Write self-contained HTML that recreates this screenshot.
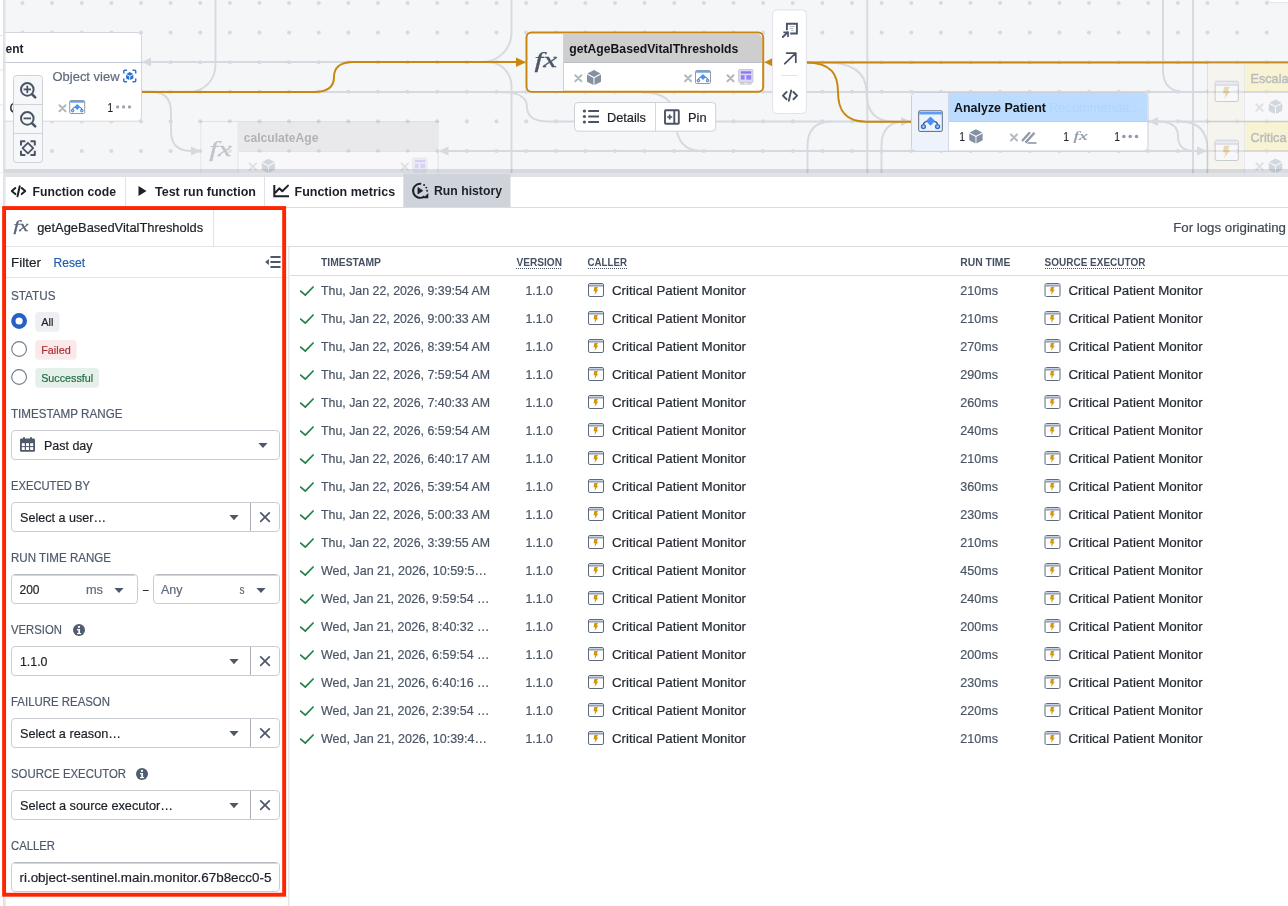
<!DOCTYPE html>
<html><head><meta charset="utf-8"><title>Run history</title>
<style>html,body{margin:0;padding:0;background:#fff;overflow:hidden}svg{display:block}text{font-family:"Liberation Sans",sans-serif;white-space:pre}</style></head><body>
<div style="will-change:transform;width:1288px;height:906px"><svg width="1288" height="906" viewBox="0 0 1288 906">
<g id="canvas">
<rect x="0" y="0" width="1288" height="173.6" fill="#f5f6f8" />
<g fill="#d7dae1">
<circle cx="22.50" cy="3.00" r="2.05"/>
<circle cx="52.12" cy="3.00" r="2.05"/>
<circle cx="81.75" cy="3.00" r="2.05"/>
<circle cx="111.38" cy="3.00" r="2.05"/>
<circle cx="141.00" cy="3.00" r="2.05"/>
<circle cx="170.62" cy="3.00" r="2.05"/>
<circle cx="200.25" cy="3.00" r="2.05"/>
<circle cx="229.88" cy="3.00" r="2.05"/>
<circle cx="259.50" cy="3.00" r="2.05"/>
<circle cx="289.12" cy="3.00" r="2.05"/>
<circle cx="318.75" cy="3.00" r="2.05"/>
<circle cx="348.38" cy="3.00" r="2.05"/>
<circle cx="378.00" cy="3.00" r="2.05"/>
<circle cx="407.62" cy="3.00" r="2.05"/>
<circle cx="437.25" cy="3.00" r="2.05"/>
<circle cx="466.88" cy="3.00" r="2.05"/>
<circle cx="496.50" cy="3.00" r="2.05"/>
<circle cx="526.12" cy="3.00" r="2.05"/>
<circle cx="555.75" cy="3.00" r="2.05"/>
<circle cx="585.38" cy="3.00" r="2.05"/>
<circle cx="615.00" cy="3.00" r="2.05"/>
<circle cx="644.62" cy="3.00" r="2.05"/>
<circle cx="674.25" cy="3.00" r="2.05"/>
<circle cx="703.88" cy="3.00" r="2.05"/>
<circle cx="733.50" cy="3.00" r="2.05"/>
<circle cx="763.12" cy="3.00" r="2.05"/>
<circle cx="792.75" cy="3.00" r="2.05"/>
<circle cx="822.38" cy="3.00" r="2.05"/>
<circle cx="852.00" cy="3.00" r="2.05"/>
<circle cx="881.62" cy="3.00" r="2.05"/>
<circle cx="911.25" cy="3.00" r="2.05"/>
<circle cx="940.88" cy="3.00" r="2.05"/>
<circle cx="970.50" cy="3.00" r="2.05"/>
<circle cx="1000.12" cy="3.00" r="2.05"/>
<circle cx="1029.75" cy="3.00" r="2.05"/>
<circle cx="1059.38" cy="3.00" r="2.05"/>
<circle cx="1089.00" cy="3.00" r="2.05"/>
<circle cx="1118.62" cy="3.00" r="2.05"/>
<circle cx="1148.25" cy="3.00" r="2.05"/>
<circle cx="1177.88" cy="3.00" r="2.05"/>
<circle cx="1207.50" cy="3.00" r="2.05"/>
<circle cx="1237.12" cy="3.00" r="2.05"/>
<circle cx="1266.75" cy="3.00" r="2.05"/>
<circle cx="22.50" cy="32.60" r="2.05"/>
<circle cx="52.12" cy="32.60" r="2.05"/>
<circle cx="81.75" cy="32.60" r="2.05"/>
<circle cx="111.38" cy="32.60" r="2.05"/>
<circle cx="141.00" cy="32.60" r="2.05"/>
<circle cx="170.62" cy="32.60" r="2.05"/>
<circle cx="200.25" cy="32.60" r="2.05"/>
<circle cx="229.88" cy="32.60" r="2.05"/>
<circle cx="259.50" cy="32.60" r="2.05"/>
<circle cx="289.12" cy="32.60" r="2.05"/>
<circle cx="318.75" cy="32.60" r="2.05"/>
<circle cx="348.38" cy="32.60" r="2.05"/>
<circle cx="378.00" cy="32.60" r="2.05"/>
<circle cx="407.62" cy="32.60" r="2.05"/>
<circle cx="437.25" cy="32.60" r="2.05"/>
<circle cx="466.88" cy="32.60" r="2.05"/>
<circle cx="496.50" cy="32.60" r="2.05"/>
<circle cx="526.12" cy="32.60" r="2.05"/>
<circle cx="555.75" cy="32.60" r="2.05"/>
<circle cx="585.38" cy="32.60" r="2.05"/>
<circle cx="615.00" cy="32.60" r="2.05"/>
<circle cx="644.62" cy="32.60" r="2.05"/>
<circle cx="674.25" cy="32.60" r="2.05"/>
<circle cx="703.88" cy="32.60" r="2.05"/>
<circle cx="733.50" cy="32.60" r="2.05"/>
<circle cx="763.12" cy="32.60" r="2.05"/>
<circle cx="792.75" cy="32.60" r="2.05"/>
<circle cx="822.38" cy="32.60" r="2.05"/>
<circle cx="852.00" cy="32.60" r="2.05"/>
<circle cx="881.62" cy="32.60" r="2.05"/>
<circle cx="911.25" cy="32.60" r="2.05"/>
<circle cx="940.88" cy="32.60" r="2.05"/>
<circle cx="970.50" cy="32.60" r="2.05"/>
<circle cx="1000.12" cy="32.60" r="2.05"/>
<circle cx="1029.75" cy="32.60" r="2.05"/>
<circle cx="1059.38" cy="32.60" r="2.05"/>
<circle cx="1089.00" cy="32.60" r="2.05"/>
<circle cx="1118.62" cy="32.60" r="2.05"/>
<circle cx="1148.25" cy="32.60" r="2.05"/>
<circle cx="1177.88" cy="32.60" r="2.05"/>
<circle cx="1207.50" cy="32.60" r="2.05"/>
<circle cx="1237.12" cy="32.60" r="2.05"/>
<circle cx="1266.75" cy="32.60" r="2.05"/>
<circle cx="22.50" cy="62.20" r="2.05"/>
<circle cx="52.12" cy="62.20" r="2.05"/>
<circle cx="81.75" cy="62.20" r="2.05"/>
<circle cx="111.38" cy="62.20" r="2.05"/>
<circle cx="141.00" cy="62.20" r="2.05"/>
<circle cx="170.62" cy="62.20" r="2.05"/>
<circle cx="200.25" cy="62.20" r="2.05"/>
<circle cx="229.88" cy="62.20" r="2.05"/>
<circle cx="259.50" cy="62.20" r="2.05"/>
<circle cx="289.12" cy="62.20" r="2.05"/>
<circle cx="318.75" cy="62.20" r="2.05"/>
<circle cx="348.38" cy="62.20" r="2.05"/>
<circle cx="378.00" cy="62.20" r="2.05"/>
<circle cx="407.62" cy="62.20" r="2.05"/>
<circle cx="437.25" cy="62.20" r="2.05"/>
<circle cx="466.88" cy="62.20" r="2.05"/>
<circle cx="496.50" cy="62.20" r="2.05"/>
<circle cx="526.12" cy="62.20" r="2.05"/>
<circle cx="555.75" cy="62.20" r="2.05"/>
<circle cx="585.38" cy="62.20" r="2.05"/>
<circle cx="615.00" cy="62.20" r="2.05"/>
<circle cx="644.62" cy="62.20" r="2.05"/>
<circle cx="674.25" cy="62.20" r="2.05"/>
<circle cx="703.88" cy="62.20" r="2.05"/>
<circle cx="733.50" cy="62.20" r="2.05"/>
<circle cx="763.12" cy="62.20" r="2.05"/>
<circle cx="792.75" cy="62.20" r="2.05"/>
<circle cx="822.38" cy="62.20" r="2.05"/>
<circle cx="852.00" cy="62.20" r="2.05"/>
<circle cx="881.62" cy="62.20" r="2.05"/>
<circle cx="911.25" cy="62.20" r="2.05"/>
<circle cx="940.88" cy="62.20" r="2.05"/>
<circle cx="970.50" cy="62.20" r="2.05"/>
<circle cx="1000.12" cy="62.20" r="2.05"/>
<circle cx="1029.75" cy="62.20" r="2.05"/>
<circle cx="1059.38" cy="62.20" r="2.05"/>
<circle cx="1089.00" cy="62.20" r="2.05"/>
<circle cx="1118.62" cy="62.20" r="2.05"/>
<circle cx="1148.25" cy="62.20" r="2.05"/>
<circle cx="1177.88" cy="62.20" r="2.05"/>
<circle cx="1207.50" cy="62.20" r="2.05"/>
<circle cx="1237.12" cy="62.20" r="2.05"/>
<circle cx="1266.75" cy="62.20" r="2.05"/>
<circle cx="22.50" cy="91.80" r="2.05"/>
<circle cx="52.12" cy="91.80" r="2.05"/>
<circle cx="81.75" cy="91.80" r="2.05"/>
<circle cx="111.38" cy="91.80" r="2.05"/>
<circle cx="141.00" cy="91.80" r="2.05"/>
<circle cx="170.62" cy="91.80" r="2.05"/>
<circle cx="200.25" cy="91.80" r="2.05"/>
<circle cx="229.88" cy="91.80" r="2.05"/>
<circle cx="259.50" cy="91.80" r="2.05"/>
<circle cx="289.12" cy="91.80" r="2.05"/>
<circle cx="318.75" cy="91.80" r="2.05"/>
<circle cx="348.38" cy="91.80" r="2.05"/>
<circle cx="378.00" cy="91.80" r="2.05"/>
<circle cx="407.62" cy="91.80" r="2.05"/>
<circle cx="437.25" cy="91.80" r="2.05"/>
<circle cx="466.88" cy="91.80" r="2.05"/>
<circle cx="496.50" cy="91.80" r="2.05"/>
<circle cx="526.12" cy="91.80" r="2.05"/>
<circle cx="555.75" cy="91.80" r="2.05"/>
<circle cx="585.38" cy="91.80" r="2.05"/>
<circle cx="615.00" cy="91.80" r="2.05"/>
<circle cx="644.62" cy="91.80" r="2.05"/>
<circle cx="674.25" cy="91.80" r="2.05"/>
<circle cx="703.88" cy="91.80" r="2.05"/>
<circle cx="733.50" cy="91.80" r="2.05"/>
<circle cx="763.12" cy="91.80" r="2.05"/>
<circle cx="792.75" cy="91.80" r="2.05"/>
<circle cx="822.38" cy="91.80" r="2.05"/>
<circle cx="852.00" cy="91.80" r="2.05"/>
<circle cx="881.62" cy="91.80" r="2.05"/>
<circle cx="911.25" cy="91.80" r="2.05"/>
<circle cx="940.88" cy="91.80" r="2.05"/>
<circle cx="970.50" cy="91.80" r="2.05"/>
<circle cx="1000.12" cy="91.80" r="2.05"/>
<circle cx="1029.75" cy="91.80" r="2.05"/>
<circle cx="1059.38" cy="91.80" r="2.05"/>
<circle cx="1089.00" cy="91.80" r="2.05"/>
<circle cx="1118.62" cy="91.80" r="2.05"/>
<circle cx="1148.25" cy="91.80" r="2.05"/>
<circle cx="1177.88" cy="91.80" r="2.05"/>
<circle cx="1207.50" cy="91.80" r="2.05"/>
<circle cx="1237.12" cy="91.80" r="2.05"/>
<circle cx="1266.75" cy="91.80" r="2.05"/>
<circle cx="22.50" cy="121.40" r="2.05"/>
<circle cx="52.12" cy="121.40" r="2.05"/>
<circle cx="81.75" cy="121.40" r="2.05"/>
<circle cx="111.38" cy="121.40" r="2.05"/>
<circle cx="141.00" cy="121.40" r="2.05"/>
<circle cx="170.62" cy="121.40" r="2.05"/>
<circle cx="200.25" cy="121.40" r="2.05"/>
<circle cx="229.88" cy="121.40" r="2.05"/>
<circle cx="259.50" cy="121.40" r="2.05"/>
<circle cx="289.12" cy="121.40" r="2.05"/>
<circle cx="318.75" cy="121.40" r="2.05"/>
<circle cx="348.38" cy="121.40" r="2.05"/>
<circle cx="378.00" cy="121.40" r="2.05"/>
<circle cx="407.62" cy="121.40" r="2.05"/>
<circle cx="437.25" cy="121.40" r="2.05"/>
<circle cx="466.88" cy="121.40" r="2.05"/>
<circle cx="496.50" cy="121.40" r="2.05"/>
<circle cx="526.12" cy="121.40" r="2.05"/>
<circle cx="555.75" cy="121.40" r="2.05"/>
<circle cx="585.38" cy="121.40" r="2.05"/>
<circle cx="615.00" cy="121.40" r="2.05"/>
<circle cx="644.62" cy="121.40" r="2.05"/>
<circle cx="674.25" cy="121.40" r="2.05"/>
<circle cx="703.88" cy="121.40" r="2.05"/>
<circle cx="733.50" cy="121.40" r="2.05"/>
<circle cx="763.12" cy="121.40" r="2.05"/>
<circle cx="792.75" cy="121.40" r="2.05"/>
<circle cx="822.38" cy="121.40" r="2.05"/>
<circle cx="852.00" cy="121.40" r="2.05"/>
<circle cx="881.62" cy="121.40" r="2.05"/>
<circle cx="911.25" cy="121.40" r="2.05"/>
<circle cx="940.88" cy="121.40" r="2.05"/>
<circle cx="970.50" cy="121.40" r="2.05"/>
<circle cx="1000.12" cy="121.40" r="2.05"/>
<circle cx="1029.75" cy="121.40" r="2.05"/>
<circle cx="1059.38" cy="121.40" r="2.05"/>
<circle cx="1089.00" cy="121.40" r="2.05"/>
<circle cx="1118.62" cy="121.40" r="2.05"/>
<circle cx="1148.25" cy="121.40" r="2.05"/>
<circle cx="1177.88" cy="121.40" r="2.05"/>
<circle cx="1207.50" cy="121.40" r="2.05"/>
<circle cx="1237.12" cy="121.40" r="2.05"/>
<circle cx="1266.75" cy="121.40" r="2.05"/>
<circle cx="22.50" cy="151.00" r="2.05"/>
<circle cx="52.12" cy="151.00" r="2.05"/>
<circle cx="81.75" cy="151.00" r="2.05"/>
<circle cx="111.38" cy="151.00" r="2.05"/>
<circle cx="141.00" cy="151.00" r="2.05"/>
<circle cx="170.62" cy="151.00" r="2.05"/>
<circle cx="200.25" cy="151.00" r="2.05"/>
<circle cx="229.88" cy="151.00" r="2.05"/>
<circle cx="259.50" cy="151.00" r="2.05"/>
<circle cx="289.12" cy="151.00" r="2.05"/>
<circle cx="318.75" cy="151.00" r="2.05"/>
<circle cx="348.38" cy="151.00" r="2.05"/>
<circle cx="378.00" cy="151.00" r="2.05"/>
<circle cx="407.62" cy="151.00" r="2.05"/>
<circle cx="437.25" cy="151.00" r="2.05"/>
<circle cx="466.88" cy="151.00" r="2.05"/>
<circle cx="496.50" cy="151.00" r="2.05"/>
<circle cx="526.12" cy="151.00" r="2.05"/>
<circle cx="555.75" cy="151.00" r="2.05"/>
<circle cx="585.38" cy="151.00" r="2.05"/>
<circle cx="615.00" cy="151.00" r="2.05"/>
<circle cx="644.62" cy="151.00" r="2.05"/>
<circle cx="674.25" cy="151.00" r="2.05"/>
<circle cx="703.88" cy="151.00" r="2.05"/>
<circle cx="733.50" cy="151.00" r="2.05"/>
<circle cx="763.12" cy="151.00" r="2.05"/>
<circle cx="792.75" cy="151.00" r="2.05"/>
<circle cx="822.38" cy="151.00" r="2.05"/>
<circle cx="852.00" cy="151.00" r="2.05"/>
<circle cx="881.62" cy="151.00" r="2.05"/>
<circle cx="911.25" cy="151.00" r="2.05"/>
<circle cx="940.88" cy="151.00" r="2.05"/>
<circle cx="970.50" cy="151.00" r="2.05"/>
<circle cx="1000.12" cy="151.00" r="2.05"/>
<circle cx="1029.75" cy="151.00" r="2.05"/>
<circle cx="1059.38" cy="151.00" r="2.05"/>
<circle cx="1089.00" cy="151.00" r="2.05"/>
<circle cx="1118.62" cy="151.00" r="2.05"/>
<circle cx="1148.25" cy="151.00" r="2.05"/>
<circle cx="1177.88" cy="151.00" r="2.05"/>
<circle cx="1207.50" cy="151.00" r="2.05"/>
<circle cx="1237.12" cy="151.00" r="2.05"/>
<circle cx="1266.75" cy="151.00" r="2.05"/>
</g>
<g fill="none" stroke="#d6d9df" stroke-width="1.9">
<path d="M151,62 H1288"/>
<path d="M511.5,0 V32.4 A29.6,29.6 0 0 1 481.9,62"/>
<path d="M487.5,62 A24,24 0 0 1 511.5,86 V173.6"/>
<path d="M215.5,0 V64 C215.5,80 205,91.8 188,91.8 H141"/>
<path d="M141,91.5 H150 Q171,91.5 171,112 V131 Q171,151 191,151"/>
<path d="M141,92 H1288"/>
<path d="M500,92 Q527,92 527,107 Q527,121.5 549,121.5 H575"/>
<path d="M448,151 H1288"/>
<path d="M716,121.5 H1288"/>
<path d="M867.3,0 V173.6"/>
<path d="M822,62 Q866.5,62 866.5,92 Q866.5,121.5 893,121.5"/>
<path d="M832,121.5 Q807.5,121.5 807.5,146 V173.6"/>
<path d="M905,121.5 Q881.5,121.5 881.5,146 V173.6"/>
<path d="M640,92 Q676,92 676,121 Q676,151 702,151"/>
<path d="M1163,0 V70 Q1163,92 1185,92"/>
<path d="M1193,0 V173.6"/>
<path d="M1158,121.5 Q1178,121.5 1178,136 Q1178,151 1194,151"/>
<path d="M1180,121.5 Q1207.5,121.5 1207.5,150 V173.6"/>
</g>
<path d="M142,62 L151,57.5 L151,66.5 Z" fill="#d6d9df" />
<path d="M201,151 L191,146.5 L191,155.5 Z" fill="#d6d9df" />
<path d="M438.5,151 L448.5,146.5 L448.5,155.5 Z" fill="#d6d9df" />
<path d="M911,121.5 L901,117.0 L901,126.0 Z" fill="#d6d9df" />
<path d="M1149,121.5 L1158,117.0 L1158,126.0 Z" fill="#d6d9df" />
<path d="M1207,151 L1197,146.5 L1197,155.5 Z" fill="#d6d9df" />
<g fill="none" stroke="#c9870f" stroke-width="2">
<path d="M141,92 H314 C328,92 334,86 334,77 C334,68 340,62 353,62 H517"/>
<path d="M806,62.4 H1288"/>
<path d="M806,62.4 C832,62.4 838,75 838,92 C838,109 844,121.7 866,121.7 H911"/>
</g>
<path d="M526,62.2 L516,57.400000000000006 L516,67.0 Z" fill="#c9870f" />
<path d="M764.5,62.3 L773.5,57.5 L773.5,67.1 Z" fill="#c9870f" />
<rect x="-5.5" y="32.5" width="147" height="88.7" fill="#ffffff" stroke="#d3d7dd" stroke-width="1" rx="4.5" />
<line x1="0" y1="62.5" x2="141.5" y2="62.5" stroke="#c3c9d2" stroke-width="1" />
<path d="M13.8,103.4 Q10.8,104.2 10.8,108 Q10.8,111.6 13.8,112.2" fill="none" stroke="#30363f" stroke-width="1.5" />
<text x="5.6" y="52.9" textLength="18" lengthAdjust="spacingAndGlyphs" font-size="13" font-weight="700" fill="#1c2127" >ent</text>
<text x="52.5" y="81.2" textLength="67" lengthAdjust="spacingAndGlyphs" font-size="13" font-weight="400" fill="#5f6b7c" stroke="#5f6b7c" stroke-width="0.2" >Object view</text>
<g transform="translate(123,69.5)">
<path d="M0.8,4 V1.8 Q0.8,0.8 1.8,0.8 H4 M9.5,0.8 H11.7 Q12.7,0.8 12.7,1.8 V4 M12.7,9 V11.2 Q12.7,12.2 11.7,12.2 H9.5 M4,12.2 H1.8 Q0.8,12.2 0.8,11.2 V9" fill="none" stroke="#2d72d2" stroke-width="1.5" />
<path d="M6.75,2.6 L10.2,4.4 L6.75,6.2 L3.3,4.4 Z" fill="#2d72d2" />
<path d="M3.1,5.3 L6.3,7 L6.3,10.6 L3.1,8.9 Z" fill="#2d72d2" />
<path d="M10.4,5.3 L7.2,7 L7.2,10.6 L10.4,8.9 Z" fill="#2d72d2" />
</g>
<path d="M59.5,105.2L65.5,111.2M65.5,105.2L59.5,111.2" fill="none" stroke="#b1b8c3" stroke-width="2.0" stroke-linecap="round"/>
<g transform="translate(69.2,100)">
<rect x="0.5" y="0.5" width="15" height="13" fill="#ffffff" stroke="#8f99a8" stroke-width="1" rx="1.2" />
<rect x="1" y="1.1" width="14" height="1.6" fill="#5c9cf5" />
<path d="M5.9,7.2 Q3.4,7.5 3.4,9.4 M10.1,7.2 Q12.6,7.5 12.6,9.4" fill="none" stroke="#3b4a60" stroke-width="0.8" />
<path d="M8.0,4.0 L11.0,7.0 L8.0,10.0 L5.0,7.0 Z" fill="#4c90f0" />
<circle cx="3.4" cy="10.6" r="1.3" fill="#a8c8f8" stroke="#2d72d2" stroke-width="0.9"/>
<circle cx="12.6" cy="10.6" r="1.3" fill="#a8c8f8" stroke="#2d72d2" stroke-width="0.9"/>
</g>
<text x="107.5" y="112" textLength="5.5" lengthAdjust="spacingAndGlyphs" font-size="13" font-weight="400" fill="#1c2127" stroke="#1c2127" stroke-width="0.2" >1</text>
<circle cx="117.6" cy="106.9" r="1.6" fill="#98a1af"/>
<circle cx="123.6" cy="106.9" r="1.6" fill="#98a1af"/>
<circle cx="129.5" cy="106.9" r="1.6" fill="#98a1af"/>
<rect x="0" y="0" width="3.2" height="172" fill="#ffffff" />
<defs><linearGradient id="lsh" x1="0" x2="1" y1="0" y2="0"><stop offset="0" stop-color="#d0d5dc"/><stop offset="1" stop-color="#eceef2" stop-opacity="0.6"/></linearGradient></defs>
<rect x="3.2" y="0" width="3" height="169" fill="url(#lsh)" />
<line x1="0" y1="35.5" x2="3.2" y2="35.5" stroke="#e1e4e9" stroke-width="1" />
<line x1="0" y1="70" x2="3.2" y2="70" stroke="#e1e4e9" stroke-width="1" />
<line x1="0" y1="105" x2="3.2" y2="105" stroke="#e1e4e9" stroke-width="1" />
<rect x="13.5" y="75.5" width="29" height="87" fill="#f6f7f9" stroke="#cfd3d9" stroke-width="1" rx="3" />
<line x1="14" y1="104.5" x2="42" y2="104.5" stroke="#cfd3d9" stroke-width="1" />
<line x1="14" y1="133.5" x2="42" y2="133.5" stroke="#cfd3d9" stroke-width="1" />
<circle cx="27.3" cy="89.4" r="6.3" fill="none" stroke="#4a5466" stroke-width="2"/>
<path d="M32.2,94.30000000000001 L35.2,97.30000000000001" fill="none" stroke="#4a5466" stroke-width="2.6" stroke-linecap="round"/>
<path d="M23.6,89.4H31" fill="none" stroke="#4a5466" stroke-width="1.8" />
<path d="M27.3,85.7V93.10000000000001" fill="none" stroke="#4a5466" stroke-width="1.8" />
<circle cx="27.3" cy="118.4" r="6.3" fill="none" stroke="#4a5466" stroke-width="2"/>
<path d="M32.2,123.30000000000001 L35.2,126.30000000000001" fill="none" stroke="#4a5466" stroke-width="2.6" stroke-linecap="round"/>
<path d="M23.6,118.4H31" fill="none" stroke="#4a5466" stroke-width="1.8" />
<path d="M21.0,145.5V141.2H25.3 M30.499999999999996,141.2H34.8V145.5 M34.8,150.7V155.0H30.499999999999996 M25.3,155.0H21.0V150.7" fill="none" stroke="#4a5466" stroke-width="2" stroke-linejoin="round"/>
<path d="M27.9,142.79999999999998 L33.199999999999996,148.1 L27.9,153.4 L22.599999999999998,148.1 Z" fill="none" stroke="#4a5466" stroke-width="1.8" stroke-linejoin="round"/>
<g opacity="0.3">
<rect x="201" y="121.5" width="237" height="60" fill="#ffffff" stroke="#aab2bd" stroke-width="1" />
<rect x="201.5" y="122" width="36.5" height="59" fill="#f6f7f9" />
<line x1="238" y1="122" x2="238" y2="181" stroke="#b9c0ca" stroke-width="1" />
<rect x="238.5" y="122" width="199" height="29.5" fill="#cecece" />
<line x1="238.5" y1="151.5" x2="437.5" y2="151.5" stroke="#b9bec6" stroke-width="1" />
<text x="243.7" y="142" textLength="74.8" lengthAdjust="spacingAndGlyphs" font-size="13" font-weight="700" fill="#111418" >calculateAge</text>
<text x="209.3" y="155.8" textLength="22.4" lengthAdjust="spacingAndGlyphs" font-size="21.5" font-weight="400" fill="#4a5566" style="font-family:'Liberation Serif'" font-style="italic" stroke="#4a5566" stroke-width="0.3">fx</text>
<path d="M249.60000000000002,163.5L256.0,169.89999999999998M256.0,163.5L249.60000000000002,169.89999999999998" fill="none" stroke="#abb3bf" stroke-width="2.0" stroke-linecap="round"/>
<g transform="translate(260.9,158.3) scale(0.9375)">
<path d="M8,0.6 L14.6,4 L8,7.4 L1.4,4 Z" fill="#8590a2" />
<path d="M1,5 L7.5,8.4 L7.5,15.6 L1,12.2 Z" fill="#8590a2" />
<path d="M15,5 L8.5,8.4 L8.5,15.6 L15,12.2 Z" fill="#8590a2" />
</g>
<path d="M401.6,163.5L408.0,169.89999999999998M408.0,163.5L401.6,169.89999999999998" fill="none" stroke="#abb3bf" stroke-width="2.0" stroke-linecap="round"/>
<g transform="translate(412.2,157.6)">
<rect x="0.5" y="0.5" width="14.2" height="13" fill="#dcd7f6" stroke="#c6c8d2" stroke-width="1" rx="0.8" />
<rect x="2.7" y="2.3" width="10.3" height="2.3" fill="#8d76e6" />
<rect x="2.7" y="6.2" width="3.7" height="4.4" fill="#9881f3" />
<rect x="8.1" y="6.2" width="4.9" height="4.4" fill="#9881f3" />
<rect x="1.8" y="13.9" width="11.6" height="1.9" fill="#cfd2d8" rx="0.5" />
<rect x="5.8" y="13.9" width="3.4" height="0.9" fill="#eef0f3" />
</g>
</g>
<rect x="526.5" y="32.6" width="236.7" height="59.1" fill="#ffffff" stroke="#c9870f" stroke-width="2" rx="5" />
<path d="M533,34 H563 V91 H533 Q528,91 528,86 V39 Q528,34 533,34 Z" fill="#f6f7f9" />
<line x1="563.5" y1="34" x2="563.5" y2="91" stroke="#cdd2d9" stroke-width="1" />
<path d="M564,34 H757 Q762,34 762,39 V62 H564 Z" fill="#cecece" />
<line x1="564" y1="62.5" x2="762" y2="62.5" stroke="#b9bec6" stroke-width="1" />
<text x="569.3" y="53" textLength="169" lengthAdjust="spacingAndGlyphs" font-size="13" font-weight="700" fill="#111418" >getAgeBasedVitalThresholds</text>
<text x="534.6" y="66.8" textLength="22.4" lengthAdjust="spacingAndGlyphs" font-size="21.5" font-weight="400" fill="#4a5566" style="font-family:'Liberation Serif'" font-style="italic" stroke="#4a5566" stroke-width="0.3">fx</text>
<path d="M575.3,75.2L581.3,81.2M581.3,75.2L575.3,81.2" fill="none" stroke="#b1b8c3" stroke-width="2.0" stroke-linecap="round"/>
<g transform="translate(586,69.5) scale(1.0)">
<path d="M8,0.6 L14.6,4 L8,7.4 L1.4,4 Z" fill="#8590a2" />
<path d="M1,5 L7.5,8.4 L7.5,15.6 L1,12.2 Z" fill="#8590a2" />
<path d="M15,5 L8.5,8.4 L8.5,15.6 L15,12.2 Z" fill="#8590a2" />
</g>
<path d="M685.1,75.2L691.1,81.2M691.1,75.2L685.1,81.2" fill="none" stroke="#b1b8c3" stroke-width="2.0" stroke-linecap="round"/>
<g transform="translate(695,70)">
<rect x="0.5" y="0.5" width="15" height="13" fill="#ffffff" stroke="#8f99a8" stroke-width="1" rx="1.2" />
<rect x="1" y="1.1" width="14" height="1.6" fill="#5c9cf5" />
<path d="M5.9,7.2 Q3.4,7.5 3.4,9.4 M10.1,7.2 Q12.6,7.5 12.6,9.4" fill="none" stroke="#3b4a60" stroke-width="0.8" />
<path d="M8.0,4.0 L11.0,7.0 L8.0,10.0 L5.0,7.0 Z" fill="#4c90f0" />
<circle cx="3.4" cy="10.6" r="1.3" fill="#a8c8f8" stroke="#2d72d2" stroke-width="0.9"/>
<circle cx="12.6" cy="10.6" r="1.3" fill="#a8c8f8" stroke="#2d72d2" stroke-width="0.9"/>
</g>
<path d="M727.5,75.2L733.5,81.2M733.5,75.2L727.5,81.2" fill="none" stroke="#b1b8c3" stroke-width="2.0" stroke-linecap="round"/>
<g transform="translate(738.2,69)">
<rect x="0.5" y="0.5" width="14.2" height="13" fill="#dcd7f6" stroke="#c6c8d2" stroke-width="1" rx="0.8" />
<rect x="2.7" y="2.3" width="10.3" height="2.3" fill="#8d76e6" />
<rect x="2.7" y="6.2" width="3.7" height="4.4" fill="#9881f3" />
<rect x="8.1" y="6.2" width="4.9" height="4.4" fill="#9881f3" />
<rect x="1.8" y="13.9" width="11.6" height="1.9" fill="#cfd2d8" rx="0.5" />
<rect x="5.8" y="13.9" width="3.4" height="0.9" fill="#eef0f3" />
</g>
<rect x="772.6" y="9.9" width="33.8" height="103.6" fill="#ffffff" stroke="#e0e3e8" stroke-width="1" rx="4" />
<path d="M786.9,30.2 V23.8 H796.9 V33.5 H790.2" fill="none" stroke="#4a5466" stroke-width="1.9" />
<path d="M789.6,26.6 H794.6 M789.6,28.6 H793.2 M791.2,30.6 H793.6" fill="none" stroke="#aab2be" stroke-width="0.9" />
<path d="M782.8,37 L787.6,32.4" fill="none" stroke="#4a5466" stroke-width="1.9" stroke-linecap="round"/>
<path d="M783.4,32.4 H788 V37" fill="none" stroke="#4a5466" stroke-width="1.7" />
<path d="M784.8,63.7 L795.5,53.3 M786.6,53.1 H795.8 V62.3" fill="none" stroke="#4a5466" stroke-width="1.8" stroke-linecap="round" stroke-linejoin="round"/>
<line x1="781" y1="75.5" x2="798" y2="75.5" stroke="#e1e4e8" stroke-width="1" />
<path d="M786.6,92 L782.9,95.6 L786.6,99.2 M793.4,92 L797.1,95.6 L793.4,99.2 M791.2,90.4 L788.8,100.9" fill="none" stroke="#4a5466" stroke-width="1.9" stroke-linecap="round" stroke-linejoin="round"/>
<rect x="574.5" y="102.5" width="141.2" height="28.7" fill="#ffffff" stroke="#cdd1d7" stroke-width="1" rx="3.5" />
<line x1="655.5" y1="103" x2="655.5" y2="131" stroke="#d3d8de" stroke-width="1" />
<circle cx="584.4" cy="111" r="1.6" fill="#4a5466"/>
<line x1="588.2" y1="111" x2="599" y2="111" stroke="#4a5466" stroke-width="2" />
<circle cx="584.4" cy="116.5" r="1.6" fill="#4a5466"/>
<line x1="588.2" y1="116.5" x2="599" y2="116.5" stroke="#4a5466" stroke-width="2" />
<circle cx="584.4" cy="122" r="1.6" fill="#4a5466"/>
<line x1="588.2" y1="122" x2="599" y2="122" stroke="#4a5466" stroke-width="2" />
<text x="607" y="121.6" textLength="39" lengthAdjust="spacingAndGlyphs" font-size="13" font-weight="400" fill="#1c2127" stroke="#1c2127" stroke-width="0.2" >Details</text>
<rect x="665" y="110.3" width="13.8" height="13.4" fill="none" stroke="#4a5466" stroke-width="1.9" rx="0.8" />
<line x1="674.3" y1="110" x2="674.3" y2="124" stroke="#4a5466" stroke-width="1.9" />
<path d="M667.2,117H672.2M669.7,114.5V119.5" fill="none" stroke="#4a5466" stroke-width="1.7" />
<text x="688" y="121.6" textLength="18.5" lengthAdjust="spacingAndGlyphs" font-size="13" font-weight="400" fill="#1c2127" stroke="#1c2127" stroke-width="0.2" >Pin</text>
<rect x="911.5" y="92.5" width="236.5" height="58.5" fill="#ffffff" stroke="#cbd0d7" stroke-width="1" rx="4.5" />
<path d="M916.5,93 H948 V150.5 H916.5 Q912,150.5 912,146 V97.5 Q912,93 916.5,93 Z" fill="#edf2fb" />
<line x1="948.5" y1="93" x2="948.5" y2="151" stroke="#d0d8e6" stroke-width="1" />
<path d="M949,93 H1143.5 Q1147.5,93 1147.5,97 V121.5 H949 Z" fill="#bbdcfe" />
<line x1="949" y1="121.5" x2="1148" y2="121.5" stroke="#c3cedc" stroke-width="1" />
<text x="954" y="111.7" textLength="92" lengthAdjust="spacingAndGlyphs" font-size="13" font-weight="700" fill="#111418" >Analyze Patient</text>
<text x="1049" y="111.7" textLength="93" lengthAdjust="spacingAndGlyphs" font-size="13" font-weight="400" fill="#b1d6fb" stroke="#b1d6fb" stroke-width="0.2" >Recommenda…</text>
<g transform="translate(918.2,110.3)">
<rect x="0.5" y="0.5" width="23.6" height="20.6" fill="#edf3fd" stroke="#5f6b7c" stroke-width="1" rx="1.2" />
<rect x="1" y="1.6912500000000001" width="22.6" height="2.4600000000000004" fill="#5c9cf5" />
<path d="M9.071250000000001,11.07 Q5.2275,11.531250000000002 5.2275,14.452499999999999 M15.52875,11.07 Q19.372500000000002,11.531250000000002 19.372500000000002,14.452499999999999" fill="none" stroke="#3b4a60" stroke-width="1.2300000000000002" />
<path d="M12.3,6.15 L16.9125,10.762500000000001 L12.3,15.375000000000002 L7.6875,10.762500000000001 Z" fill="#4c90f0" />
<circle cx="5.2275" cy="16.2975" r="1.9987500000000002" fill="#a8c8f8" stroke="#2d72d2" stroke-width="1.38375"/>
<circle cx="19.372500000000002" cy="16.2975" r="1.9987500000000002" fill="#a8c8f8" stroke="#2d72d2" stroke-width="1.38375"/>
</g>
<text x="959.5" y="140.6" textLength="5.3" lengthAdjust="spacingAndGlyphs" font-size="13" font-weight="400" fill="#1c2127" stroke="#1c2127" stroke-width="0.2" >1</text>
<g transform="translate(968.3,128.7) scale(0.95625)">
<path d="M8,0.6 L14.6,4 L8,7.4 L1.4,4 Z" fill="#8590a2" />
<path d="M1,5 L7.5,8.4 L7.5,15.6 L1,12.2 Z" fill="#8590a2" />
<path d="M15,5 L8.5,8.4 L8.5,15.6 L15,12.2 Z" fill="#8590a2" />
</g>
<path d="M1011.0,134.5L1017.0,140.5M1017.0,134.5L1011.0,140.5" fill="none" stroke="#b1b8c3" stroke-width="2.0" stroke-linecap="round"/>
<path d="M1022,141 L1030,132.2 M1025.5,142.6 L1034.5,132.8" fill="none" stroke="#8f99a8" stroke-width="2.3" />
<path d="M1027.5,143H1036.5" fill="none" stroke="#8f99a8" stroke-width="1.6" />
<text x="1063.5" y="140.6" textLength="5.3" lengthAdjust="spacingAndGlyphs" font-size="13" font-weight="400" fill="#1c2127" stroke="#1c2127" stroke-width="0.2" >1</text>
<text x="1073.6" y="140" textLength="14" lengthAdjust="spacingAndGlyphs" font-size="12.5" font-weight="400" fill="#8f99a8" style="font-family:'Liberation Serif'" font-style="italic" stroke="#8f99a8" stroke-width="0.2">fx</text>
<text x="1114.4" y="140.6" textLength="5.3" lengthAdjust="spacingAndGlyphs" font-size="13" font-weight="400" fill="#1c2127" stroke="#1c2127" stroke-width="0.2" >1</text>
<circle cx="1123.9" cy="136.6" r="1.75" fill="#8f99a8"/>
<circle cx="1130.2" cy="136.6" r="1.75" fill="#8f99a8"/>
<circle cx="1136.5" cy="136.6" r="1.75" fill="#8f99a8"/>
<g opacity="0.3">
<rect x="1207.5" y="63" width="100" height="59" fill="#ffffff" stroke="#aab2bd" stroke-width="1" />
<rect x="1208" y="63.5" width="36.5" height="58" fill="#f8f1dc" />
<rect x="1245" y="63.5" width="60" height="28.5" fill="#ffee80" />
<line x1="1244.5" y1="63" x2="1244.5" y2="122" stroke="#c5c9cf" stroke-width="1" />
<line x1="1245" y1="92" x2="1288" y2="92" stroke="#c9c4a0" stroke-width="1" />
<text x="1250.5" y="82.7" textLength="38" lengthAdjust="spacingAndGlyphs" font-size="13.5" font-weight="400" fill="#30353d" stroke="#30353d" stroke-width="0.5">Escala</text>
<g transform="translate(1214.6,80.8)">
<rect x="0.5" y="0.5" width="23.2" height="20.2" fill="#ffffff" stroke="#5f6b7c" stroke-width="1" rx="1.5" />
<rect x="1" y="1" width="22.2" height="2.6" fill="#c9d4e3" />
<line x1="0.5" y1="4.2" x2="23.7" y2="4.2" stroke="#5f6b7c" stroke-width="1" />
<g transform="translate(-0.3000000000000007,-0.20000000000000107) scale(1.55)">
<path d="M6.3,4.0 H9.9 L8.7,6.7 H10.2 L6.5,12.0 L7.2,8.3 H5.6 Z" fill="#d1980b" />
</g>
</g>
<path d="M1256.3,104.3L1262.7,110.7M1262.7,104.3L1256.3,110.7" fill="none" stroke="#abb3bf" stroke-width="2.0" stroke-linecap="round"/>
<g transform="translate(1267.8,99) scale(0.9625)">
<path d="M8,0.6 L14.6,4 L8,7.4 L1.4,4 Z" fill="#8590a2" />
<path d="M1,5 L7.5,8.4 L7.5,15.6 L1,12.2 Z" fill="#8590a2" />
<path d="M15,5 L8.5,8.4 L8.5,15.6 L15,12.2 Z" fill="#8590a2" />
</g>
<rect x="1207.5" y="121.5" width="100" height="59" fill="#ffffff" stroke="#aab2bd" stroke-width="1" />
<rect x="1208" y="122.0" width="36.5" height="58" fill="#f8f1dc" />
<rect x="1245" y="122.0" width="60" height="29.0" fill="#ffee80" />
<line x1="1244.5" y1="121.5" x2="1244.5" y2="180.5" stroke="#c5c9cf" stroke-width="1" />
<line x1="1245" y1="151" x2="1288" y2="151" stroke="#c9c4a0" stroke-width="1" />
<text x="1250.5" y="141.7" textLength="36" lengthAdjust="spacingAndGlyphs" font-size="13.5" font-weight="400" fill="#30353d" stroke="#30353d" stroke-width="0.5">Critica</text>
<g transform="translate(1214.6,139.8)">
<rect x="0.5" y="0.5" width="23.2" height="20.2" fill="#ffffff" stroke="#5f6b7c" stroke-width="1" rx="1.5" />
<rect x="1" y="1" width="22.2" height="2.6" fill="#c9d4e3" />
<line x1="0.5" y1="4.2" x2="23.7" y2="4.2" stroke="#5f6b7c" stroke-width="1" />
<g transform="translate(-0.3000000000000007,-0.20000000000000107) scale(1.55)">
<path d="M6.3,4.0 H9.9 L8.7,6.7 H10.2 L6.5,12.0 L7.2,8.3 H5.6 Z" fill="#d1980b" />
</g>
</g>
<path d="M1256.3,163.3L1262.7,169.7M1262.7,163.3L1256.3,169.7" fill="none" stroke="#abb3bf" stroke-width="2.0" stroke-linecap="round"/>
<g transform="translate(1267.8,158) scale(0.9625)">
<path d="M8,0.6 L14.6,4 L8,7.4 L1.4,4 Z" fill="#8590a2" />
<path d="M1,5 L7.5,8.4 L7.5,15.6 L1,12.2 Z" fill="#8590a2" />
<path d="M15,5 L8.5,8.4 L8.5,15.6 L15,12.2 Z" fill="#8590a2" />
</g>
</g>
<rect x="1268" y="-6" width="30" height="8.6" fill="#ffffff" stroke="#e4e7eb" stroke-width="1" rx="3" />
<rect x="3.2" y="169" width="1288" height="4.6" fill="#5f6b7c" opacity="0.2"/>
<rect x="3.2" y="173.6" width="1288" height="3.4" fill="#dfe2e7" />
</g>
<g id="panel">
<rect x="0" y="177" width="1288" height="729" fill="#ffffff" />
<rect x="3.2" y="177" width="3" height="729" fill="url(#lsh)" />
<rect x="403.3" y="173.7" width="107.2" height="33.5" fill="#cfd3da" />
<line x1="6" y1="207.5" x2="1288" y2="207.5" stroke="#d9dde2" stroke-width="1" />
<line x1="125.5" y1="174" x2="125.5" y2="206.5" stroke="#dfe2e7" stroke-width="1" />
<line x1="264.5" y1="174" x2="264.5" y2="206.5" stroke="#dfe2e7" stroke-width="1" />
<path d="M15.3,188.1 L11.8,191.1 L15.3,194.1 M21.7,188.1 L25.2,191.1 L21.7,194.1 M19.7,186.2 L17.5,196.2" fill="none" stroke="#1c2127" stroke-width="2" stroke-linecap="round" stroke-linejoin="round"/>
<text x="32.5" y="195.7" textLength="83.5" lengthAdjust="spacingAndGlyphs" font-size="13" font-weight="700" fill="#1c2127" >Function code</text>
<path d="M138.5,186 L146.5,191 L138.5,196 Z" fill="#1c2127" />
<text x="155" y="195.7" textLength="101" lengthAdjust="spacingAndGlyphs" font-size="13" font-weight="700" fill="#1c2127" >Test run function</text>
<path d="M274.3,185 V196.2 H289" fill="none" stroke="#1c2127" stroke-width="2" />
<path d="M275.5,192.5 L279.3,188.3 L282.3,191.3 L288,185.6" fill="none" stroke="#1c2127" stroke-width="2" stroke-linejoin="round" stroke-linecap="round"/>
<text x="294.5" y="195.7" textLength="100.7" lengthAdjust="spacingAndGlyphs" font-size="13" font-weight="700" fill="#1c2127" >Function metrics</text>
<path d="M421.2,183.9 A7,7 0 1 0 424.5,196.2" fill="none" stroke="#1c2127" stroke-width="1.9" />
<circle cx="424.1" cy="185.0" r="0.95" fill="#1c2127"/>
<circle cx="426.3" cy="187.6" r="0.95" fill="#1c2127"/>
<circle cx="427.1" cy="190.8" r="0.95" fill="#1c2127"/>
<path d="M428.3,193.0 V198.3 H423.0 Z" fill="#1c2127" />
<path d="M417.9,187.4 L422.9,190.7 L417.9,194.0 Z" fill="#1c2127" stroke="#1c2127" stroke-width="0.6" stroke-linejoin="round"/>
<text x="434" y="195.4" textLength="68" lengthAdjust="spacingAndGlyphs" font-size="13" font-weight="700" fill="#1c2127" >Run history</text>
<text x="13.6" y="231.3" textLength="15" lengthAdjust="spacingAndGlyphs" font-size="13.8" font-weight="400" fill="#586478" style="font-family:'Liberation Serif'" font-style="italic" stroke="#586478" stroke-width="0.3">fx</text>
<text x="37.2" y="232" textLength="166" lengthAdjust="spacingAndGlyphs" font-size="13" font-weight="400" fill="#1c2127" stroke="#1c2127" stroke-width="0.2" >getAgeBasedVitalThresholds</text>
<line x1="213.5" y1="210" x2="213.5" y2="246" stroke="#dfe2e7" stroke-width="1" />
<line x1="6" y1="246.5" x2="287.5" y2="246.5" stroke="#e1e4e8" stroke-width="1" />
<text x="11" y="266.6" textLength="30" lengthAdjust="spacingAndGlyphs" font-size="13" font-weight="400" fill="#1c2127" stroke="#1c2127" stroke-width="0.2" >Filter</text>
<text x="53.5" y="266.6" textLength="31.5" lengthAdjust="spacingAndGlyphs" font-size="13" font-weight="400" fill="#215db0" stroke="#215db0" stroke-width="0.2" >Reset</text>
<path d="M268.5,259.6 V264.4 L265.6,262 Z" fill="#4d586a" stroke="#4d586a" stroke-width="0.8" stroke-linejoin="round"/>
<path d="M271.2,257H279.8M271.2,262H279.8M271.2,267.1H279.8" fill="none" stroke="#4d586a" stroke-width="2" stroke-linecap="round"/>
<line x1="6" y1="277.5" x2="287.5" y2="277.5" stroke="#e1e4e8" stroke-width="1" />
<text x="11" y="299.8" textLength="44.5" lengthAdjust="spacingAndGlyphs" font-size="13" font-weight="400" fill="#4e5a6b" stroke="#4e5a6b" stroke-width="0.2" >STATUS</text>
<circle cx="19.1" cy="321" r="7.9" fill="#275fc4"/>
<circle cx="19.1" cy="321" r="3.6" fill="#ffffff"/>
<rect x="35.2" y="312" width="24.4" height="19.8" fill="#edeff2" rx="4" />
<text x="41.2" y="325.5" textLength="12.2" lengthAdjust="spacingAndGlyphs" font-size="11.5" font-weight="400" fill="#1c2127" stroke="#1c2127" stroke-width="0.2" >All</text>
<circle cx="19.1" cy="349" r="7.4" fill="#ffffff" stroke="#707b8c" stroke-width="1.1"/>
<rect x="35.2" y="340" width="41.4" height="19.8" fill="#fae9ea" rx="4" />
<text x="41.2" y="353.5" textLength="29.5" lengthAdjust="spacingAndGlyphs" font-size="11.5" font-weight="400" fill="#ac2f33" stroke="#ac2f33" stroke-width="0.2" >Failed</text>
<circle cx="19.1" cy="377" r="7.4" fill="#ffffff" stroke="#707b8c" stroke-width="1.1"/>
<rect x="35.2" y="368" width="63.9" height="19.8" fill="#e6f0eb" rx="4" />
<text x="41.2" y="381.5" textLength="52" lengthAdjust="spacingAndGlyphs" font-size="11.5" font-weight="400" fill="#1c6e42" stroke="#1c6e42" stroke-width="0.2" >Successful</text>
<text x="11" y="418" textLength="111.5" lengthAdjust="spacingAndGlyphs" font-size="13" font-weight="400" fill="#4e5a6b" stroke="#4e5a6b" stroke-width="0.2" >TIMESTAMP RANGE</text>
<rect x="11.5" y="430.5" width="268" height="29" fill="#ffffff" stroke="#c9cdd3" stroke-width="1" rx="3.5" />
<g transform="translate(20,437)">
<rect x="0" y="1.6" width="15" height="13.2" fill="#4d586a" rx="1.4" />
<rect x="3.1" y="0" width="1.8" height="3.2" fill="#4d586a" rx="0.7" />
<rect x="10.1" y="0" width="1.8" height="3.2" fill="#4d586a" rx="0.7" />
<rect x="2.2" y="0.9" width="3.6" height="1.5" fill="#ffffff" rx="0.5" opacity="0"/>
<rect x="1.8" y="6.2" width="3" height="2.9" fill="#ffffff" />
<rect x="6.0" y="6.2" width="3" height="2.9" fill="#ffffff" />
<rect x="10.2" y="6.2" width="3" height="2.9" fill="#ffffff" />
<rect x="1.8" y="10.1" width="3" height="2.9" fill="#ffffff" />
<rect x="6.0" y="10.1" width="3" height="2.9" fill="#ffffff" />
<rect x="10.2" y="10.1" width="3" height="2.9" fill="#ffffff" />
<path d="M5.6,1.6V0.6M9.4,1.6V0.6" fill="none" stroke="#ffffff" stroke-width="0" />
</g>
<text x="44" y="449.5" textLength="48.5" lengthAdjust="spacingAndGlyphs" font-size="13" font-weight="400" fill="#1c2127" stroke="#1c2127" stroke-width="0.2" >Past day</text>
<path d="M258.4,442.9 H267.6 L263,448.1 Z" fill="#4d586a" stroke-linejoin="round"/>
<text x="11" y="490" textLength="79" lengthAdjust="spacingAndGlyphs" font-size="13" font-weight="400" fill="#4e5a6b" stroke="#4e5a6b" stroke-width="0.2" >EXECUTED BY</text>
<rect x="11.5" y="502.5" width="268" height="29" fill="#ffffff" stroke="#c9cdd3" stroke-width="1" rx="3.5" />
<text x="20" y="522" textLength="86" lengthAdjust="spacingAndGlyphs" font-size="13" font-weight="400" fill="#1c2127" stroke="#1c2127" stroke-width="0.2" >Select a user…</text>
<line x1="250.5" y1="503" x2="250.5" y2="531" stroke="#a9afb8" stroke-width="1" />
<path d="M229.4,515.0 H238.6 L234,520.2 Z" fill="#4d586a" stroke-linejoin="round"/>
<path d="M260.7,512.8000000000001L269.3,521.4M269.3,512.8000000000001L260.7,521.4" fill="none" stroke="#4d586a" stroke-width="1.7" stroke-linecap="round"/>
<text x="11" y="562" textLength="100" lengthAdjust="spacingAndGlyphs" font-size="13" font-weight="400" fill="#4e5a6b" stroke="#4e5a6b" stroke-width="0.2" >RUN TIME RANGE</text>
<rect x="11.5" y="574.5" width="126" height="29" fill="#ffffff" stroke="#c9cdd3" stroke-width="1" rx="3.5" />
<line x1="14.5" y1="575" x2="134.5" y2="575" stroke="#a7acb4" stroke-width="1" />
<text x="19.5" y="593.9" textLength="20" lengthAdjust="spacingAndGlyphs" font-size="13" font-weight="400" fill="#1c2127" stroke="#1c2127" stroke-width="0.2" >200</text>
<text x="86" y="593.9" textLength="17" lengthAdjust="spacingAndGlyphs" font-size="13" font-weight="400" fill="#5f6b7c" stroke="#5f6b7c" stroke-width="0.2" >ms</text>
<path d="M114.4,587.9 H123.6 L119,593.1 Z" fill="#4d586a" stroke-linejoin="round"/>
<text x="143" y="593.5" textLength="5.5" lengthAdjust="spacingAndGlyphs" font-size="13" font-weight="400" fill="#1c2127" stroke="#1c2127" stroke-width="0.2" >–</text>
<rect x="153.5" y="574.5" width="126" height="29" fill="#ffffff" stroke="#c9cdd3" stroke-width="1" rx="3.5" />
<line x1="156.5" y1="575" x2="276.5" y2="575" stroke="#a7acb4" stroke-width="1" />
<text x="161" y="593.9" textLength="21.5" lengthAdjust="spacingAndGlyphs" font-size="13" font-weight="400" fill="#5f6b7c" stroke="#5f6b7c" stroke-width="0.2" >Any</text>
<text x="239.5" y="593.9" textLength="5" lengthAdjust="spacingAndGlyphs" font-size="13" font-weight="400" fill="#5f6b7c" stroke="#5f6b7c" stroke-width="0.2" >s</text>
<path d="M256.4,587.9 H265.6 L261,593.1 Z" fill="#4d586a" stroke-linejoin="round"/>
<text x="11" y="634" textLength="51" lengthAdjust="spacingAndGlyphs" font-size="13" font-weight="400" fill="#4e5a6b" stroke="#4e5a6b" stroke-width="0.2" >VERSION</text>
<circle cx="79" cy="629.9" r="6" fill="#505c70"/>
<rect x="77.95" y="625.9499999999999" width="2.0" height="1.85" fill="#fff" />
<rect x="78.3" y="628.9499999999999" width="1.75" height="4.2" fill="#fff" />
<rect x="77" y="628.9499999999999" width="1.5" height="1.4" fill="#fff" />
<rect x="77" y="632.9499999999999" width="4.1" height="1.2" fill="#fff" />
<rect x="11.5" y="646.5" width="268" height="29" fill="#ffffff" stroke="#c9cdd3" stroke-width="1" rx="3.5" />
<text x="20" y="666" textLength="27.5" lengthAdjust="spacingAndGlyphs" font-size="13" font-weight="400" fill="#1c2127" stroke="#1c2127" stroke-width="0.2" >1.1.0</text>
<line x1="250.5" y1="647" x2="250.5" y2="675" stroke="#a9afb8" stroke-width="1" />
<path d="M229.4,659.0 H238.6 L234,664.2 Z" fill="#4d586a" stroke-linejoin="round"/>
<path d="M260.7,656.8000000000001L269.3,665.4M269.3,656.8000000000001L260.7,665.4" fill="none" stroke="#4d586a" stroke-width="1.7" stroke-linecap="round"/>
<text x="11" y="706" textLength="99" lengthAdjust="spacingAndGlyphs" font-size="13" font-weight="400" fill="#4e5a6b" stroke="#4e5a6b" stroke-width="0.2" >FAILURE REASON</text>
<rect x="11.5" y="718.5" width="268" height="29" fill="#ffffff" stroke="#c9cdd3" stroke-width="1" rx="3.5" />
<text x="20" y="738" textLength="101" lengthAdjust="spacingAndGlyphs" font-size="13" font-weight="400" fill="#1c2127" stroke="#1c2127" stroke-width="0.2" >Select a reason…</text>
<line x1="250.5" y1="719" x2="250.5" y2="747" stroke="#a9afb8" stroke-width="1" />
<path d="M229.4,731.0 H238.6 L234,736.2 Z" fill="#4d586a" stroke-linejoin="round"/>
<path d="M260.7,728.8000000000001L269.3,737.4M269.3,728.8000000000001L260.7,737.4" fill="none" stroke="#4d586a" stroke-width="1.7" stroke-linecap="round"/>
<text x="11" y="778" textLength="115" lengthAdjust="spacingAndGlyphs" font-size="13" font-weight="400" fill="#4e5a6b" stroke="#4e5a6b" stroke-width="0.2" >SOURCE EXECUTOR</text>
<circle cx="142" cy="773.9" r="6" fill="#505c70"/>
<rect x="140.95" y="769.9499999999999" width="2.0" height="1.85" fill="#fff" />
<rect x="141.3" y="772.9499999999999" width="1.75" height="4.2" fill="#fff" />
<rect x="140" y="772.9499999999999" width="1.5" height="1.4" fill="#fff" />
<rect x="140" y="776.9499999999999" width="4.1" height="1.2" fill="#fff" />
<rect x="11.5" y="790.5" width="268" height="29" fill="#ffffff" stroke="#c9cdd3" stroke-width="1" rx="3.5" />
<text x="20" y="810" textLength="153" lengthAdjust="spacingAndGlyphs" font-size="13" font-weight="400" fill="#1c2127" stroke="#1c2127" stroke-width="0.2" >Select a source executor…</text>
<line x1="250.5" y1="791" x2="250.5" y2="819" stroke="#a9afb8" stroke-width="1" />
<path d="M229.4,803.0 H238.6 L234,808.2 Z" fill="#4d586a" stroke-linejoin="round"/>
<path d="M260.7,800.8000000000001L269.3,809.4M269.3,800.8000000000001L260.7,809.4" fill="none" stroke="#4d586a" stroke-width="1.7" stroke-linecap="round"/>
<text x="11" y="850" textLength="44" lengthAdjust="spacingAndGlyphs" font-size="13" font-weight="400" fill="#4e5a6b" stroke="#4e5a6b" stroke-width="0.2" >CALLER</text>
<rect x="11.5" y="862.5" width="268" height="29" fill="#ffffff" stroke="#c9cdd3" stroke-width="1" rx="3.5" />
<clipPath id="cpin"><rect x="12" y="863" width="259.8" height="28"/></clipPath>
<text x="19.5" y="881.9" textLength="259.3" lengthAdjust="spacingAndGlyphs" font-size="13" font-weight="400" fill="#1c2127" stroke="#1c2127" stroke-width="0.2" clip-path="url(#cpin)">ri.object-sentinel.main.monitor.67b8ecc0-58</text>
<line x1="14.5" y1="863" x2="276.5" y2="863" stroke="#a7acb4" stroke-width="1" />
<rect x="4.1" y="208.05" width="280.05" height="686.7" fill="none" stroke="#ff2500" stroke-width="3.9" />
<line x1="288.8" y1="246" x2="288.8" y2="906" stroke="#d9dce1" stroke-width="1" />
<line x1="289" y1="246.5" x2="1288" y2="246.5" stroke="#d9dde2" stroke-width="1" />
<line x1="290" y1="275.5" x2="1288" y2="275.5" stroke="#d9dde2" stroke-width="1" />
<text x="1173.2" y="231.5" textLength="112.8" lengthAdjust="spacingAndGlyphs" font-size="13" font-weight="400" fill="#404854" stroke="#404854" stroke-width="0.2" >For logs originating</text>
<text x="321" y="266" textLength="60" lengthAdjust="spacingAndGlyphs" font-size="11" font-weight="700" fill="#465061" >TIMESTAMP</text>
<text x="516.5" y="266" textLength="45.5" lengthAdjust="spacingAndGlyphs" font-size="11" font-weight="700" fill="#465061" >VERSION</text>
<line x1="516" y1="268.5" x2="562" y2="268.5" stroke="#465061" stroke-width="1" stroke-dasharray="1 1" shape-rendering="crispEdges"/>
<text x="587.5" y="266" textLength="39.5" lengthAdjust="spacingAndGlyphs" font-size="11" font-weight="700" fill="#465061" >CALLER</text>
<line x1="588" y1="268.5" x2="627" y2="268.5" stroke="#465061" stroke-width="1" stroke-dasharray="1 1" shape-rendering="crispEdges"/>
<text x="960.3" y="266" textLength="50" lengthAdjust="spacingAndGlyphs" font-size="11" font-weight="700" fill="#465061" >RUN TIME</text>
<text x="1044.6" y="266" textLength="100.8" lengthAdjust="spacingAndGlyphs" font-size="11" font-weight="700" fill="#465061" >SOURCE EXECUTOR</text>
<line x1="1045" y1="268.5" x2="1145" y2="268.5" stroke="#465061" stroke-width="1" stroke-dasharray="1 1" shape-rendering="crispEdges"/>
<path d="M300.7,291.1 L305.3,295.1 L313.1,287.0" fill="none" stroke="#1f7f4a" stroke-width="1.7" stroke-linecap="round" stroke-linejoin="round"/>
<text x="321" y="295.0" textLength="169" lengthAdjust="spacingAndGlyphs" font-size="13" font-weight="400" fill="#4a5565" stroke="#4a5565" stroke-width="0.2" >Thu, Jan 22, 2026, 9:39:54 AM</text>
<text x="525.5" y="295.0" textLength="27.5" lengthAdjust="spacingAndGlyphs" font-size="13" font-weight="400" fill="#4a5565" stroke="#4a5565" stroke-width="0.2" >1.1.0</text>
<g transform="translate(588,283.0)">
<rect x="0.5" y="0.5" width="15" height="13" fill="#ffffff" stroke="#5f6b7c" stroke-width="1" rx="1.5" />
<rect x="1" y="1" width="14" height="1.6" fill="#c9d4e3" />
<line x1="1" y1="2.9" x2="15" y2="2.9" stroke="#5f6b7c" stroke-width="0.9" />
<path d="M6.3,4.0 H9.9 L8.7,6.7 H10.2 L6.5,12.0 L7.2,8.3 H5.6 Z" fill="#d1980b" />
</g>
<text x="612" y="295.0" textLength="134" lengthAdjust="spacingAndGlyphs" font-size="13" font-weight="400" fill="#252a31" stroke="#252a31" stroke-width="0.2" >Critical Patient Monitor</text>
<text x="960.3" y="295.0" textLength="37.7" lengthAdjust="spacingAndGlyphs" font-size="13" font-weight="400" fill="#4a5565" stroke="#4a5565" stroke-width="0.2" >210ms</text>
<g transform="translate(1044.5,283.0)">
<rect x="0.5" y="0.5" width="15" height="13" fill="#ffffff" stroke="#5f6b7c" stroke-width="1" rx="1.5" />
<rect x="1" y="1" width="14" height="1.6" fill="#c9d4e3" />
<line x1="1" y1="2.9" x2="15" y2="2.9" stroke="#5f6b7c" stroke-width="0.9" />
<path d="M6.3,4.0 H9.9 L8.7,6.7 H10.2 L6.5,12.0 L7.2,8.3 H5.6 Z" fill="#d1980b" />
</g>
<text x="1068.4" y="295.0" textLength="134.3" lengthAdjust="spacingAndGlyphs" font-size="13" font-weight="400" fill="#252a31" stroke="#252a31" stroke-width="0.2" >Critical Patient Monitor</text>
<path d="M300.7,319.1 L305.3,323.1 L313.1,315.0" fill="none" stroke="#1f7f4a" stroke-width="1.7" stroke-linecap="round" stroke-linejoin="round"/>
<text x="321" y="323.0" textLength="169" lengthAdjust="spacingAndGlyphs" font-size="13" font-weight="400" fill="#4a5565" stroke="#4a5565" stroke-width="0.2" >Thu, Jan 22, 2026, 9:00:33 AM</text>
<text x="525.5" y="323.0" textLength="27.5" lengthAdjust="spacingAndGlyphs" font-size="13" font-weight="400" fill="#4a5565" stroke="#4a5565" stroke-width="0.2" >1.1.0</text>
<g transform="translate(588,311.0)">
<rect x="0.5" y="0.5" width="15" height="13" fill="#ffffff" stroke="#5f6b7c" stroke-width="1" rx="1.5" />
<rect x="1" y="1" width="14" height="1.6" fill="#c9d4e3" />
<line x1="1" y1="2.9" x2="15" y2="2.9" stroke="#5f6b7c" stroke-width="0.9" />
<path d="M6.3,4.0 H9.9 L8.7,6.7 H10.2 L6.5,12.0 L7.2,8.3 H5.6 Z" fill="#d1980b" />
</g>
<text x="612" y="323.0" textLength="134" lengthAdjust="spacingAndGlyphs" font-size="13" font-weight="400" fill="#252a31" stroke="#252a31" stroke-width="0.2" >Critical Patient Monitor</text>
<text x="960.3" y="323.0" textLength="37.7" lengthAdjust="spacingAndGlyphs" font-size="13" font-weight="400" fill="#4a5565" stroke="#4a5565" stroke-width="0.2" >210ms</text>
<g transform="translate(1044.5,311.0)">
<rect x="0.5" y="0.5" width="15" height="13" fill="#ffffff" stroke="#5f6b7c" stroke-width="1" rx="1.5" />
<rect x="1" y="1" width="14" height="1.6" fill="#c9d4e3" />
<line x1="1" y1="2.9" x2="15" y2="2.9" stroke="#5f6b7c" stroke-width="0.9" />
<path d="M6.3,4.0 H9.9 L8.7,6.7 H10.2 L6.5,12.0 L7.2,8.3 H5.6 Z" fill="#d1980b" />
</g>
<text x="1068.4" y="323.0" textLength="134.3" lengthAdjust="spacingAndGlyphs" font-size="13" font-weight="400" fill="#252a31" stroke="#252a31" stroke-width="0.2" >Critical Patient Monitor</text>
<path d="M300.7,347.1 L305.3,351.1 L313.1,343.0" fill="none" stroke="#1f7f4a" stroke-width="1.7" stroke-linecap="round" stroke-linejoin="round"/>
<text x="321" y="351.0" textLength="169" lengthAdjust="spacingAndGlyphs" font-size="13" font-weight="400" fill="#4a5565" stroke="#4a5565" stroke-width="0.2" >Thu, Jan 22, 2026, 8:39:54 AM</text>
<text x="525.5" y="351.0" textLength="27.5" lengthAdjust="spacingAndGlyphs" font-size="13" font-weight="400" fill="#4a5565" stroke="#4a5565" stroke-width="0.2" >1.1.0</text>
<g transform="translate(588,339.0)">
<rect x="0.5" y="0.5" width="15" height="13" fill="#ffffff" stroke="#5f6b7c" stroke-width="1" rx="1.5" />
<rect x="1" y="1" width="14" height="1.6" fill="#c9d4e3" />
<line x1="1" y1="2.9" x2="15" y2="2.9" stroke="#5f6b7c" stroke-width="0.9" />
<path d="M6.3,4.0 H9.9 L8.7,6.7 H10.2 L6.5,12.0 L7.2,8.3 H5.6 Z" fill="#d1980b" />
</g>
<text x="612" y="351.0" textLength="134" lengthAdjust="spacingAndGlyphs" font-size="13" font-weight="400" fill="#252a31" stroke="#252a31" stroke-width="0.2" >Critical Patient Monitor</text>
<text x="960.3" y="351.0" textLength="37.7" lengthAdjust="spacingAndGlyphs" font-size="13" font-weight="400" fill="#4a5565" stroke="#4a5565" stroke-width="0.2" >270ms</text>
<g transform="translate(1044.5,339.0)">
<rect x="0.5" y="0.5" width="15" height="13" fill="#ffffff" stroke="#5f6b7c" stroke-width="1" rx="1.5" />
<rect x="1" y="1" width="14" height="1.6" fill="#c9d4e3" />
<line x1="1" y1="2.9" x2="15" y2="2.9" stroke="#5f6b7c" stroke-width="0.9" />
<path d="M6.3,4.0 H9.9 L8.7,6.7 H10.2 L6.5,12.0 L7.2,8.3 H5.6 Z" fill="#d1980b" />
</g>
<text x="1068.4" y="351.0" textLength="134.3" lengthAdjust="spacingAndGlyphs" font-size="13" font-weight="400" fill="#252a31" stroke="#252a31" stroke-width="0.2" >Critical Patient Monitor</text>
<path d="M300.7,375.1 L305.3,379.1 L313.1,371.0" fill="none" stroke="#1f7f4a" stroke-width="1.7" stroke-linecap="round" stroke-linejoin="round"/>
<text x="321" y="379.0" textLength="169" lengthAdjust="spacingAndGlyphs" font-size="13" font-weight="400" fill="#4a5565" stroke="#4a5565" stroke-width="0.2" >Thu, Jan 22, 2026, 7:59:54 AM</text>
<text x="525.5" y="379.0" textLength="27.5" lengthAdjust="spacingAndGlyphs" font-size="13" font-weight="400" fill="#4a5565" stroke="#4a5565" stroke-width="0.2" >1.1.0</text>
<g transform="translate(588,367.0)">
<rect x="0.5" y="0.5" width="15" height="13" fill="#ffffff" stroke="#5f6b7c" stroke-width="1" rx="1.5" />
<rect x="1" y="1" width="14" height="1.6" fill="#c9d4e3" />
<line x1="1" y1="2.9" x2="15" y2="2.9" stroke="#5f6b7c" stroke-width="0.9" />
<path d="M6.3,4.0 H9.9 L8.7,6.7 H10.2 L6.5,12.0 L7.2,8.3 H5.6 Z" fill="#d1980b" />
</g>
<text x="612" y="379.0" textLength="134" lengthAdjust="spacingAndGlyphs" font-size="13" font-weight="400" fill="#252a31" stroke="#252a31" stroke-width="0.2" >Critical Patient Monitor</text>
<text x="960.3" y="379.0" textLength="37.7" lengthAdjust="spacingAndGlyphs" font-size="13" font-weight="400" fill="#4a5565" stroke="#4a5565" stroke-width="0.2" >290ms</text>
<g transform="translate(1044.5,367.0)">
<rect x="0.5" y="0.5" width="15" height="13" fill="#ffffff" stroke="#5f6b7c" stroke-width="1" rx="1.5" />
<rect x="1" y="1" width="14" height="1.6" fill="#c9d4e3" />
<line x1="1" y1="2.9" x2="15" y2="2.9" stroke="#5f6b7c" stroke-width="0.9" />
<path d="M6.3,4.0 H9.9 L8.7,6.7 H10.2 L6.5,12.0 L7.2,8.3 H5.6 Z" fill="#d1980b" />
</g>
<text x="1068.4" y="379.0" textLength="134.3" lengthAdjust="spacingAndGlyphs" font-size="13" font-weight="400" fill="#252a31" stroke="#252a31" stroke-width="0.2" >Critical Patient Monitor</text>
<path d="M300.7,403.1 L305.3,407.1 L313.1,399.0" fill="none" stroke="#1f7f4a" stroke-width="1.7" stroke-linecap="round" stroke-linejoin="round"/>
<text x="321" y="407.0" textLength="169" lengthAdjust="spacingAndGlyphs" font-size="13" font-weight="400" fill="#4a5565" stroke="#4a5565" stroke-width="0.2" >Thu, Jan 22, 2026, 7:40:33 AM</text>
<text x="525.5" y="407.0" textLength="27.5" lengthAdjust="spacingAndGlyphs" font-size="13" font-weight="400" fill="#4a5565" stroke="#4a5565" stroke-width="0.2" >1.1.0</text>
<g transform="translate(588,395.0)">
<rect x="0.5" y="0.5" width="15" height="13" fill="#ffffff" stroke="#5f6b7c" stroke-width="1" rx="1.5" />
<rect x="1" y="1" width="14" height="1.6" fill="#c9d4e3" />
<line x1="1" y1="2.9" x2="15" y2="2.9" stroke="#5f6b7c" stroke-width="0.9" />
<path d="M6.3,4.0 H9.9 L8.7,6.7 H10.2 L6.5,12.0 L7.2,8.3 H5.6 Z" fill="#d1980b" />
</g>
<text x="612" y="407.0" textLength="134" lengthAdjust="spacingAndGlyphs" font-size="13" font-weight="400" fill="#252a31" stroke="#252a31" stroke-width="0.2" >Critical Patient Monitor</text>
<text x="960.3" y="407.0" textLength="37.7" lengthAdjust="spacingAndGlyphs" font-size="13" font-weight="400" fill="#4a5565" stroke="#4a5565" stroke-width="0.2" >260ms</text>
<g transform="translate(1044.5,395.0)">
<rect x="0.5" y="0.5" width="15" height="13" fill="#ffffff" stroke="#5f6b7c" stroke-width="1" rx="1.5" />
<rect x="1" y="1" width="14" height="1.6" fill="#c9d4e3" />
<line x1="1" y1="2.9" x2="15" y2="2.9" stroke="#5f6b7c" stroke-width="0.9" />
<path d="M6.3,4.0 H9.9 L8.7,6.7 H10.2 L6.5,12.0 L7.2,8.3 H5.6 Z" fill="#d1980b" />
</g>
<text x="1068.4" y="407.0" textLength="134.3" lengthAdjust="spacingAndGlyphs" font-size="13" font-weight="400" fill="#252a31" stroke="#252a31" stroke-width="0.2" >Critical Patient Monitor</text>
<path d="M300.7,431.1 L305.3,435.1 L313.1,427.0" fill="none" stroke="#1f7f4a" stroke-width="1.7" stroke-linecap="round" stroke-linejoin="round"/>
<text x="321" y="435.0" textLength="169" lengthAdjust="spacingAndGlyphs" font-size="13" font-weight="400" fill="#4a5565" stroke="#4a5565" stroke-width="0.2" >Thu, Jan 22, 2026, 6:59:54 AM</text>
<text x="525.5" y="435.0" textLength="27.5" lengthAdjust="spacingAndGlyphs" font-size="13" font-weight="400" fill="#4a5565" stroke="#4a5565" stroke-width="0.2" >1.1.0</text>
<g transform="translate(588,423.0)">
<rect x="0.5" y="0.5" width="15" height="13" fill="#ffffff" stroke="#5f6b7c" stroke-width="1" rx="1.5" />
<rect x="1" y="1" width="14" height="1.6" fill="#c9d4e3" />
<line x1="1" y1="2.9" x2="15" y2="2.9" stroke="#5f6b7c" stroke-width="0.9" />
<path d="M6.3,4.0 H9.9 L8.7,6.7 H10.2 L6.5,12.0 L7.2,8.3 H5.6 Z" fill="#d1980b" />
</g>
<text x="612" y="435.0" textLength="134" lengthAdjust="spacingAndGlyphs" font-size="13" font-weight="400" fill="#252a31" stroke="#252a31" stroke-width="0.2" >Critical Patient Monitor</text>
<text x="960.3" y="435.0" textLength="37.7" lengthAdjust="spacingAndGlyphs" font-size="13" font-weight="400" fill="#4a5565" stroke="#4a5565" stroke-width="0.2" >240ms</text>
<g transform="translate(1044.5,423.0)">
<rect x="0.5" y="0.5" width="15" height="13" fill="#ffffff" stroke="#5f6b7c" stroke-width="1" rx="1.5" />
<rect x="1" y="1" width="14" height="1.6" fill="#c9d4e3" />
<line x1="1" y1="2.9" x2="15" y2="2.9" stroke="#5f6b7c" stroke-width="0.9" />
<path d="M6.3,4.0 H9.9 L8.7,6.7 H10.2 L6.5,12.0 L7.2,8.3 H5.6 Z" fill="#d1980b" />
</g>
<text x="1068.4" y="435.0" textLength="134.3" lengthAdjust="spacingAndGlyphs" font-size="13" font-weight="400" fill="#252a31" stroke="#252a31" stroke-width="0.2" >Critical Patient Monitor</text>
<path d="M300.7,459.1 L305.3,463.1 L313.1,455.0" fill="none" stroke="#1f7f4a" stroke-width="1.7" stroke-linecap="round" stroke-linejoin="round"/>
<text x="321" y="463.0" textLength="169" lengthAdjust="spacingAndGlyphs" font-size="13" font-weight="400" fill="#4a5565" stroke="#4a5565" stroke-width="0.2" >Thu, Jan 22, 2026, 6:40:17 AM</text>
<text x="525.5" y="463.0" textLength="27.5" lengthAdjust="spacingAndGlyphs" font-size="13" font-weight="400" fill="#4a5565" stroke="#4a5565" stroke-width="0.2" >1.1.0</text>
<g transform="translate(588,451.0)">
<rect x="0.5" y="0.5" width="15" height="13" fill="#ffffff" stroke="#5f6b7c" stroke-width="1" rx="1.5" />
<rect x="1" y="1" width="14" height="1.6" fill="#c9d4e3" />
<line x1="1" y1="2.9" x2="15" y2="2.9" stroke="#5f6b7c" stroke-width="0.9" />
<path d="M6.3,4.0 H9.9 L8.7,6.7 H10.2 L6.5,12.0 L7.2,8.3 H5.6 Z" fill="#d1980b" />
</g>
<text x="612" y="463.0" textLength="134" lengthAdjust="spacingAndGlyphs" font-size="13" font-weight="400" fill="#252a31" stroke="#252a31" stroke-width="0.2" >Critical Patient Monitor</text>
<text x="960.3" y="463.0" textLength="37.7" lengthAdjust="spacingAndGlyphs" font-size="13" font-weight="400" fill="#4a5565" stroke="#4a5565" stroke-width="0.2" >210ms</text>
<g transform="translate(1044.5,451.0)">
<rect x="0.5" y="0.5" width="15" height="13" fill="#ffffff" stroke="#5f6b7c" stroke-width="1" rx="1.5" />
<rect x="1" y="1" width="14" height="1.6" fill="#c9d4e3" />
<line x1="1" y1="2.9" x2="15" y2="2.9" stroke="#5f6b7c" stroke-width="0.9" />
<path d="M6.3,4.0 H9.9 L8.7,6.7 H10.2 L6.5,12.0 L7.2,8.3 H5.6 Z" fill="#d1980b" />
</g>
<text x="1068.4" y="463.0" textLength="134.3" lengthAdjust="spacingAndGlyphs" font-size="13" font-weight="400" fill="#252a31" stroke="#252a31" stroke-width="0.2" >Critical Patient Monitor</text>
<path d="M300.7,487.1 L305.3,491.1 L313.1,483.0" fill="none" stroke="#1f7f4a" stroke-width="1.7" stroke-linecap="round" stroke-linejoin="round"/>
<text x="321" y="491.0" textLength="169" lengthAdjust="spacingAndGlyphs" font-size="13" font-weight="400" fill="#4a5565" stroke="#4a5565" stroke-width="0.2" >Thu, Jan 22, 2026, 5:39:54 AM</text>
<text x="525.5" y="491.0" textLength="27.5" lengthAdjust="spacingAndGlyphs" font-size="13" font-weight="400" fill="#4a5565" stroke="#4a5565" stroke-width="0.2" >1.1.0</text>
<g transform="translate(588,479.0)">
<rect x="0.5" y="0.5" width="15" height="13" fill="#ffffff" stroke="#5f6b7c" stroke-width="1" rx="1.5" />
<rect x="1" y="1" width="14" height="1.6" fill="#c9d4e3" />
<line x1="1" y1="2.9" x2="15" y2="2.9" stroke="#5f6b7c" stroke-width="0.9" />
<path d="M6.3,4.0 H9.9 L8.7,6.7 H10.2 L6.5,12.0 L7.2,8.3 H5.6 Z" fill="#d1980b" />
</g>
<text x="612" y="491.0" textLength="134" lengthAdjust="spacingAndGlyphs" font-size="13" font-weight="400" fill="#252a31" stroke="#252a31" stroke-width="0.2" >Critical Patient Monitor</text>
<text x="960.3" y="491.0" textLength="37.7" lengthAdjust="spacingAndGlyphs" font-size="13" font-weight="400" fill="#4a5565" stroke="#4a5565" stroke-width="0.2" >360ms</text>
<g transform="translate(1044.5,479.0)">
<rect x="0.5" y="0.5" width="15" height="13" fill="#ffffff" stroke="#5f6b7c" stroke-width="1" rx="1.5" />
<rect x="1" y="1" width="14" height="1.6" fill="#c9d4e3" />
<line x1="1" y1="2.9" x2="15" y2="2.9" stroke="#5f6b7c" stroke-width="0.9" />
<path d="M6.3,4.0 H9.9 L8.7,6.7 H10.2 L6.5,12.0 L7.2,8.3 H5.6 Z" fill="#d1980b" />
</g>
<text x="1068.4" y="491.0" textLength="134.3" lengthAdjust="spacingAndGlyphs" font-size="13" font-weight="400" fill="#252a31" stroke="#252a31" stroke-width="0.2" >Critical Patient Monitor</text>
<path d="M300.7,515.1 L305.3,519.1 L313.1,511.0" fill="none" stroke="#1f7f4a" stroke-width="1.7" stroke-linecap="round" stroke-linejoin="round"/>
<text x="321" y="519.0" textLength="169" lengthAdjust="spacingAndGlyphs" font-size="13" font-weight="400" fill="#4a5565" stroke="#4a5565" stroke-width="0.2" >Thu, Jan 22, 2026, 5:00:33 AM</text>
<text x="525.5" y="519.0" textLength="27.5" lengthAdjust="spacingAndGlyphs" font-size="13" font-weight="400" fill="#4a5565" stroke="#4a5565" stroke-width="0.2" >1.1.0</text>
<g transform="translate(588,507.0)">
<rect x="0.5" y="0.5" width="15" height="13" fill="#ffffff" stroke="#5f6b7c" stroke-width="1" rx="1.5" />
<rect x="1" y="1" width="14" height="1.6" fill="#c9d4e3" />
<line x1="1" y1="2.9" x2="15" y2="2.9" stroke="#5f6b7c" stroke-width="0.9" />
<path d="M6.3,4.0 H9.9 L8.7,6.7 H10.2 L6.5,12.0 L7.2,8.3 H5.6 Z" fill="#d1980b" />
</g>
<text x="612" y="519.0" textLength="134" lengthAdjust="spacingAndGlyphs" font-size="13" font-weight="400" fill="#252a31" stroke="#252a31" stroke-width="0.2" >Critical Patient Monitor</text>
<text x="960.3" y="519.0" textLength="37.7" lengthAdjust="spacingAndGlyphs" font-size="13" font-weight="400" fill="#4a5565" stroke="#4a5565" stroke-width="0.2" >230ms</text>
<g transform="translate(1044.5,507.0)">
<rect x="0.5" y="0.5" width="15" height="13" fill="#ffffff" stroke="#5f6b7c" stroke-width="1" rx="1.5" />
<rect x="1" y="1" width="14" height="1.6" fill="#c9d4e3" />
<line x1="1" y1="2.9" x2="15" y2="2.9" stroke="#5f6b7c" stroke-width="0.9" />
<path d="M6.3,4.0 H9.9 L8.7,6.7 H10.2 L6.5,12.0 L7.2,8.3 H5.6 Z" fill="#d1980b" />
</g>
<text x="1068.4" y="519.0" textLength="134.3" lengthAdjust="spacingAndGlyphs" font-size="13" font-weight="400" fill="#252a31" stroke="#252a31" stroke-width="0.2" >Critical Patient Monitor</text>
<path d="M300.7,543.1 L305.3,547.1 L313.1,539.0" fill="none" stroke="#1f7f4a" stroke-width="1.7" stroke-linecap="round" stroke-linejoin="round"/>
<text x="321" y="547.0" textLength="169" lengthAdjust="spacingAndGlyphs" font-size="13" font-weight="400" fill="#4a5565" stroke="#4a5565" stroke-width="0.2" >Thu, Jan 22, 2026, 3:39:55 AM</text>
<text x="525.5" y="547.0" textLength="27.5" lengthAdjust="spacingAndGlyphs" font-size="13" font-weight="400" fill="#4a5565" stroke="#4a5565" stroke-width="0.2" >1.1.0</text>
<g transform="translate(588,535.0)">
<rect x="0.5" y="0.5" width="15" height="13" fill="#ffffff" stroke="#5f6b7c" stroke-width="1" rx="1.5" />
<rect x="1" y="1" width="14" height="1.6" fill="#c9d4e3" />
<line x1="1" y1="2.9" x2="15" y2="2.9" stroke="#5f6b7c" stroke-width="0.9" />
<path d="M6.3,4.0 H9.9 L8.7,6.7 H10.2 L6.5,12.0 L7.2,8.3 H5.6 Z" fill="#d1980b" />
</g>
<text x="612" y="547.0" textLength="134" lengthAdjust="spacingAndGlyphs" font-size="13" font-weight="400" fill="#252a31" stroke="#252a31" stroke-width="0.2" >Critical Patient Monitor</text>
<text x="960.3" y="547.0" textLength="37.7" lengthAdjust="spacingAndGlyphs" font-size="13" font-weight="400" fill="#4a5565" stroke="#4a5565" stroke-width="0.2" >210ms</text>
<g transform="translate(1044.5,535.0)">
<rect x="0.5" y="0.5" width="15" height="13" fill="#ffffff" stroke="#5f6b7c" stroke-width="1" rx="1.5" />
<rect x="1" y="1" width="14" height="1.6" fill="#c9d4e3" />
<line x1="1" y1="2.9" x2="15" y2="2.9" stroke="#5f6b7c" stroke-width="0.9" />
<path d="M6.3,4.0 H9.9 L8.7,6.7 H10.2 L6.5,12.0 L7.2,8.3 H5.6 Z" fill="#d1980b" />
</g>
<text x="1068.4" y="547.0" textLength="134.3" lengthAdjust="spacingAndGlyphs" font-size="13" font-weight="400" fill="#252a31" stroke="#252a31" stroke-width="0.2" >Critical Patient Monitor</text>
<path d="M300.7,571.1 L305.3,575.1 L313.1,567.0" fill="none" stroke="#1f7f4a" stroke-width="1.7" stroke-linecap="round" stroke-linejoin="round"/>
<text x="321" y="575.0" textLength="166" lengthAdjust="spacingAndGlyphs" font-size="13" font-weight="400" fill="#4a5565" stroke="#4a5565" stroke-width="0.2" >Wed, Jan 21, 2026, 10:59:5…</text>
<text x="525.5" y="575.0" textLength="27.5" lengthAdjust="spacingAndGlyphs" font-size="13" font-weight="400" fill="#4a5565" stroke="#4a5565" stroke-width="0.2" >1.1.0</text>
<g transform="translate(588,563.0)">
<rect x="0.5" y="0.5" width="15" height="13" fill="#ffffff" stroke="#5f6b7c" stroke-width="1" rx="1.5" />
<rect x="1" y="1" width="14" height="1.6" fill="#c9d4e3" />
<line x1="1" y1="2.9" x2="15" y2="2.9" stroke="#5f6b7c" stroke-width="0.9" />
<path d="M6.3,4.0 H9.9 L8.7,6.7 H10.2 L6.5,12.0 L7.2,8.3 H5.6 Z" fill="#d1980b" />
</g>
<text x="612" y="575.0" textLength="134" lengthAdjust="spacingAndGlyphs" font-size="13" font-weight="400" fill="#252a31" stroke="#252a31" stroke-width="0.2" >Critical Patient Monitor</text>
<text x="960.3" y="575.0" textLength="37.7" lengthAdjust="spacingAndGlyphs" font-size="13" font-weight="400" fill="#4a5565" stroke="#4a5565" stroke-width="0.2" >450ms</text>
<g transform="translate(1044.5,563.0)">
<rect x="0.5" y="0.5" width="15" height="13" fill="#ffffff" stroke="#5f6b7c" stroke-width="1" rx="1.5" />
<rect x="1" y="1" width="14" height="1.6" fill="#c9d4e3" />
<line x1="1" y1="2.9" x2="15" y2="2.9" stroke="#5f6b7c" stroke-width="0.9" />
<path d="M6.3,4.0 H9.9 L8.7,6.7 H10.2 L6.5,12.0 L7.2,8.3 H5.6 Z" fill="#d1980b" />
</g>
<text x="1068.4" y="575.0" textLength="134.3" lengthAdjust="spacingAndGlyphs" font-size="13" font-weight="400" fill="#252a31" stroke="#252a31" stroke-width="0.2" >Critical Patient Monitor</text>
<path d="M300.7,599.1 L305.3,603.1 L313.1,595.0" fill="none" stroke="#1f7f4a" stroke-width="1.7" stroke-linecap="round" stroke-linejoin="round"/>
<text x="321" y="603.0" textLength="168.5" lengthAdjust="spacingAndGlyphs" font-size="13" font-weight="400" fill="#4a5565" stroke="#4a5565" stroke-width="0.2" >Wed, Jan 21, 2026, 9:59:54 …</text>
<text x="525.5" y="603.0" textLength="27.5" lengthAdjust="spacingAndGlyphs" font-size="13" font-weight="400" fill="#4a5565" stroke="#4a5565" stroke-width="0.2" >1.1.0</text>
<g transform="translate(588,591.0)">
<rect x="0.5" y="0.5" width="15" height="13" fill="#ffffff" stroke="#5f6b7c" stroke-width="1" rx="1.5" />
<rect x="1" y="1" width="14" height="1.6" fill="#c9d4e3" />
<line x1="1" y1="2.9" x2="15" y2="2.9" stroke="#5f6b7c" stroke-width="0.9" />
<path d="M6.3,4.0 H9.9 L8.7,6.7 H10.2 L6.5,12.0 L7.2,8.3 H5.6 Z" fill="#d1980b" />
</g>
<text x="612" y="603.0" textLength="134" lengthAdjust="spacingAndGlyphs" font-size="13" font-weight="400" fill="#252a31" stroke="#252a31" stroke-width="0.2" >Critical Patient Monitor</text>
<text x="960.3" y="603.0" textLength="37.7" lengthAdjust="spacingAndGlyphs" font-size="13" font-weight="400" fill="#4a5565" stroke="#4a5565" stroke-width="0.2" >240ms</text>
<g transform="translate(1044.5,591.0)">
<rect x="0.5" y="0.5" width="15" height="13" fill="#ffffff" stroke="#5f6b7c" stroke-width="1" rx="1.5" />
<rect x="1" y="1" width="14" height="1.6" fill="#c9d4e3" />
<line x1="1" y1="2.9" x2="15" y2="2.9" stroke="#5f6b7c" stroke-width="0.9" />
<path d="M6.3,4.0 H9.9 L8.7,6.7 H10.2 L6.5,12.0 L7.2,8.3 H5.6 Z" fill="#d1980b" />
</g>
<text x="1068.4" y="603.0" textLength="134.3" lengthAdjust="spacingAndGlyphs" font-size="13" font-weight="400" fill="#252a31" stroke="#252a31" stroke-width="0.2" >Critical Patient Monitor</text>
<path d="M300.7,627.1 L305.3,631.1 L313.1,623.0" fill="none" stroke="#1f7f4a" stroke-width="1.7" stroke-linecap="round" stroke-linejoin="round"/>
<text x="321" y="631.0" textLength="168.5" lengthAdjust="spacingAndGlyphs" font-size="13" font-weight="400" fill="#4a5565" stroke="#4a5565" stroke-width="0.2" >Wed, Jan 21, 2026, 8:40:32 …</text>
<text x="525.5" y="631.0" textLength="27.5" lengthAdjust="spacingAndGlyphs" font-size="13" font-weight="400" fill="#4a5565" stroke="#4a5565" stroke-width="0.2" >1.1.0</text>
<g transform="translate(588,619.0)">
<rect x="0.5" y="0.5" width="15" height="13" fill="#ffffff" stroke="#5f6b7c" stroke-width="1" rx="1.5" />
<rect x="1" y="1" width="14" height="1.6" fill="#c9d4e3" />
<line x1="1" y1="2.9" x2="15" y2="2.9" stroke="#5f6b7c" stroke-width="0.9" />
<path d="M6.3,4.0 H9.9 L8.7,6.7 H10.2 L6.5,12.0 L7.2,8.3 H5.6 Z" fill="#d1980b" />
</g>
<text x="612" y="631.0" textLength="134" lengthAdjust="spacingAndGlyphs" font-size="13" font-weight="400" fill="#252a31" stroke="#252a31" stroke-width="0.2" >Critical Patient Monitor</text>
<text x="960.3" y="631.0" textLength="37.7" lengthAdjust="spacingAndGlyphs" font-size="13" font-weight="400" fill="#4a5565" stroke="#4a5565" stroke-width="0.2" >200ms</text>
<g transform="translate(1044.5,619.0)">
<rect x="0.5" y="0.5" width="15" height="13" fill="#ffffff" stroke="#5f6b7c" stroke-width="1" rx="1.5" />
<rect x="1" y="1" width="14" height="1.6" fill="#c9d4e3" />
<line x1="1" y1="2.9" x2="15" y2="2.9" stroke="#5f6b7c" stroke-width="0.9" />
<path d="M6.3,4.0 H9.9 L8.7,6.7 H10.2 L6.5,12.0 L7.2,8.3 H5.6 Z" fill="#d1980b" />
</g>
<text x="1068.4" y="631.0" textLength="134.3" lengthAdjust="spacingAndGlyphs" font-size="13" font-weight="400" fill="#252a31" stroke="#252a31" stroke-width="0.2" >Critical Patient Monitor</text>
<path d="M300.7,655.1 L305.3,659.1 L313.1,651.0" fill="none" stroke="#1f7f4a" stroke-width="1.7" stroke-linecap="round" stroke-linejoin="round"/>
<text x="321" y="659.0" textLength="168.5" lengthAdjust="spacingAndGlyphs" font-size="13" font-weight="400" fill="#4a5565" stroke="#4a5565" stroke-width="0.2" >Wed, Jan 21, 2026, 6:59:54 …</text>
<text x="525.5" y="659.0" textLength="27.5" lengthAdjust="spacingAndGlyphs" font-size="13" font-weight="400" fill="#4a5565" stroke="#4a5565" stroke-width="0.2" >1.1.0</text>
<g transform="translate(588,647.0)">
<rect x="0.5" y="0.5" width="15" height="13" fill="#ffffff" stroke="#5f6b7c" stroke-width="1" rx="1.5" />
<rect x="1" y="1" width="14" height="1.6" fill="#c9d4e3" />
<line x1="1" y1="2.9" x2="15" y2="2.9" stroke="#5f6b7c" stroke-width="0.9" />
<path d="M6.3,4.0 H9.9 L8.7,6.7 H10.2 L6.5,12.0 L7.2,8.3 H5.6 Z" fill="#d1980b" />
</g>
<text x="612" y="659.0" textLength="134" lengthAdjust="spacingAndGlyphs" font-size="13" font-weight="400" fill="#252a31" stroke="#252a31" stroke-width="0.2" >Critical Patient Monitor</text>
<text x="960.3" y="659.0" textLength="37.7" lengthAdjust="spacingAndGlyphs" font-size="13" font-weight="400" fill="#4a5565" stroke="#4a5565" stroke-width="0.2" >200ms</text>
<g transform="translate(1044.5,647.0)">
<rect x="0.5" y="0.5" width="15" height="13" fill="#ffffff" stroke="#5f6b7c" stroke-width="1" rx="1.5" />
<rect x="1" y="1" width="14" height="1.6" fill="#c9d4e3" />
<line x1="1" y1="2.9" x2="15" y2="2.9" stroke="#5f6b7c" stroke-width="0.9" />
<path d="M6.3,4.0 H9.9 L8.7,6.7 H10.2 L6.5,12.0 L7.2,8.3 H5.6 Z" fill="#d1980b" />
</g>
<text x="1068.4" y="659.0" textLength="134.3" lengthAdjust="spacingAndGlyphs" font-size="13" font-weight="400" fill="#252a31" stroke="#252a31" stroke-width="0.2" >Critical Patient Monitor</text>
<path d="M300.7,683.1 L305.3,687.1 L313.1,679.0" fill="none" stroke="#1f7f4a" stroke-width="1.7" stroke-linecap="round" stroke-linejoin="round"/>
<text x="321" y="687.0" textLength="168.5" lengthAdjust="spacingAndGlyphs" font-size="13" font-weight="400" fill="#4a5565" stroke="#4a5565" stroke-width="0.2" >Wed, Jan 21, 2026, 6:40:16 …</text>
<text x="525.5" y="687.0" textLength="27.5" lengthAdjust="spacingAndGlyphs" font-size="13" font-weight="400" fill="#4a5565" stroke="#4a5565" stroke-width="0.2" >1.1.0</text>
<g transform="translate(588,675.0)">
<rect x="0.5" y="0.5" width="15" height="13" fill="#ffffff" stroke="#5f6b7c" stroke-width="1" rx="1.5" />
<rect x="1" y="1" width="14" height="1.6" fill="#c9d4e3" />
<line x1="1" y1="2.9" x2="15" y2="2.9" stroke="#5f6b7c" stroke-width="0.9" />
<path d="M6.3,4.0 H9.9 L8.7,6.7 H10.2 L6.5,12.0 L7.2,8.3 H5.6 Z" fill="#d1980b" />
</g>
<text x="612" y="687.0" textLength="134" lengthAdjust="spacingAndGlyphs" font-size="13" font-weight="400" fill="#252a31" stroke="#252a31" stroke-width="0.2" >Critical Patient Monitor</text>
<text x="960.3" y="687.0" textLength="37.7" lengthAdjust="spacingAndGlyphs" font-size="13" font-weight="400" fill="#4a5565" stroke="#4a5565" stroke-width="0.2" >230ms</text>
<g transform="translate(1044.5,675.0)">
<rect x="0.5" y="0.5" width="15" height="13" fill="#ffffff" stroke="#5f6b7c" stroke-width="1" rx="1.5" />
<rect x="1" y="1" width="14" height="1.6" fill="#c9d4e3" />
<line x1="1" y1="2.9" x2="15" y2="2.9" stroke="#5f6b7c" stroke-width="0.9" />
<path d="M6.3,4.0 H9.9 L8.7,6.7 H10.2 L6.5,12.0 L7.2,8.3 H5.6 Z" fill="#d1980b" />
</g>
<text x="1068.4" y="687.0" textLength="134.3" lengthAdjust="spacingAndGlyphs" font-size="13" font-weight="400" fill="#252a31" stroke="#252a31" stroke-width="0.2" >Critical Patient Monitor</text>
<path d="M300.7,711.1 L305.3,715.1 L313.1,707.0" fill="none" stroke="#1f7f4a" stroke-width="1.7" stroke-linecap="round" stroke-linejoin="round"/>
<text x="321" y="715.0" textLength="168.5" lengthAdjust="spacingAndGlyphs" font-size="13" font-weight="400" fill="#4a5565" stroke="#4a5565" stroke-width="0.2" >Wed, Jan 21, 2026, 2:39:54 …</text>
<text x="525.5" y="715.0" textLength="27.5" lengthAdjust="spacingAndGlyphs" font-size="13" font-weight="400" fill="#4a5565" stroke="#4a5565" stroke-width="0.2" >1.1.0</text>
<g transform="translate(588,703.0)">
<rect x="0.5" y="0.5" width="15" height="13" fill="#ffffff" stroke="#5f6b7c" stroke-width="1" rx="1.5" />
<rect x="1" y="1" width="14" height="1.6" fill="#c9d4e3" />
<line x1="1" y1="2.9" x2="15" y2="2.9" stroke="#5f6b7c" stroke-width="0.9" />
<path d="M6.3,4.0 H9.9 L8.7,6.7 H10.2 L6.5,12.0 L7.2,8.3 H5.6 Z" fill="#d1980b" />
</g>
<text x="612" y="715.0" textLength="134" lengthAdjust="spacingAndGlyphs" font-size="13" font-weight="400" fill="#252a31" stroke="#252a31" stroke-width="0.2" >Critical Patient Monitor</text>
<text x="960.3" y="715.0" textLength="37.7" lengthAdjust="spacingAndGlyphs" font-size="13" font-weight="400" fill="#4a5565" stroke="#4a5565" stroke-width="0.2" >220ms</text>
<g transform="translate(1044.5,703.0)">
<rect x="0.5" y="0.5" width="15" height="13" fill="#ffffff" stroke="#5f6b7c" stroke-width="1" rx="1.5" />
<rect x="1" y="1" width="14" height="1.6" fill="#c9d4e3" />
<line x1="1" y1="2.9" x2="15" y2="2.9" stroke="#5f6b7c" stroke-width="0.9" />
<path d="M6.3,4.0 H9.9 L8.7,6.7 H10.2 L6.5,12.0 L7.2,8.3 H5.6 Z" fill="#d1980b" />
</g>
<text x="1068.4" y="715.0" textLength="134.3" lengthAdjust="spacingAndGlyphs" font-size="13" font-weight="400" fill="#252a31" stroke="#252a31" stroke-width="0.2" >Critical Patient Monitor</text>
<path d="M300.7,739.1 L305.3,743.1 L313.1,735.0" fill="none" stroke="#1f7f4a" stroke-width="1.7" stroke-linecap="round" stroke-linejoin="round"/>
<text x="321" y="743.0" textLength="166" lengthAdjust="spacingAndGlyphs" font-size="13" font-weight="400" fill="#4a5565" stroke="#4a5565" stroke-width="0.2" >Wed, Jan 21, 2026, 10:39:4…</text>
<text x="525.5" y="743.0" textLength="27.5" lengthAdjust="spacingAndGlyphs" font-size="13" font-weight="400" fill="#4a5565" stroke="#4a5565" stroke-width="0.2" >1.1.0</text>
<g transform="translate(588,731.0)">
<rect x="0.5" y="0.5" width="15" height="13" fill="#ffffff" stroke="#5f6b7c" stroke-width="1" rx="1.5" />
<rect x="1" y="1" width="14" height="1.6" fill="#c9d4e3" />
<line x1="1" y1="2.9" x2="15" y2="2.9" stroke="#5f6b7c" stroke-width="0.9" />
<path d="M6.3,4.0 H9.9 L8.7,6.7 H10.2 L6.5,12.0 L7.2,8.3 H5.6 Z" fill="#d1980b" />
</g>
<text x="612" y="743.0" textLength="134" lengthAdjust="spacingAndGlyphs" font-size="13" font-weight="400" fill="#252a31" stroke="#252a31" stroke-width="0.2" >Critical Patient Monitor</text>
<text x="960.3" y="743.0" textLength="37.7" lengthAdjust="spacingAndGlyphs" font-size="13" font-weight="400" fill="#4a5565" stroke="#4a5565" stroke-width="0.2" >210ms</text>
<g transform="translate(1044.5,731.0)">
<rect x="0.5" y="0.5" width="15" height="13" fill="#ffffff" stroke="#5f6b7c" stroke-width="1" rx="1.5" />
<rect x="1" y="1" width="14" height="1.6" fill="#c9d4e3" />
<line x1="1" y1="2.9" x2="15" y2="2.9" stroke="#5f6b7c" stroke-width="0.9" />
<path d="M6.3,4.0 H9.9 L8.7,6.7 H10.2 L6.5,12.0 L7.2,8.3 H5.6 Z" fill="#d1980b" />
</g>
<text x="1068.4" y="743.0" textLength="134.3" lengthAdjust="spacingAndGlyphs" font-size="13" font-weight="400" fill="#252a31" stroke="#252a31" stroke-width="0.2" >Critical Patient Monitor</text>
</g>
</svg></div></body></html>
